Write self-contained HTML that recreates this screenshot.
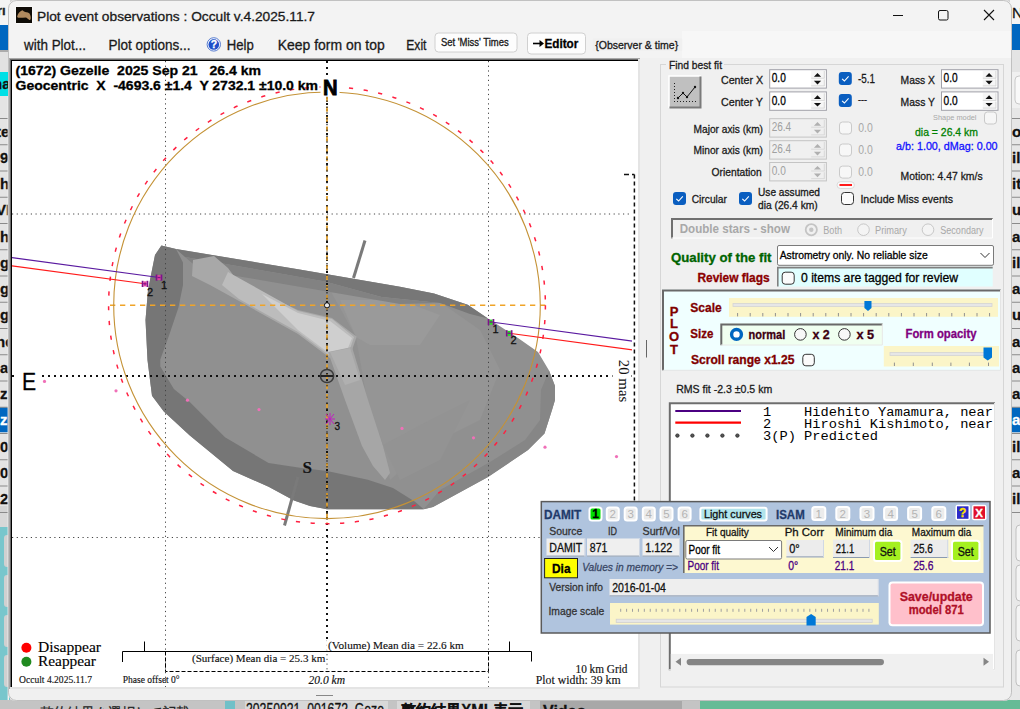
<!DOCTYPE html><html><head><meta charset="utf-8"><style>html,body{margin:0;padding:0;width:1020px;height:709px;overflow:hidden;background:#c8c8c8}svg{display:block}</style></head><body>
<svg width="1020" height="709" viewBox="0 0 1020 709">
<rect x="0" y="0" width="1020" height="709" fill="#d4d4d4" stroke="none" stroke-width="1" rx="0" />
<rect x="0" y="0" width="10" height="25" fill="#f4f4f4" stroke="none" stroke-width="1" rx="0" />
<text x="-3" y="15" font-family="Liberation Sans" font-size="13" font-weight="bold" font-style="normal" fill="#222" text-anchor="start"  stroke="#222" stroke-width="0.3">rı</text>
<rect x="0" y="25" width="10" height="25" fill="#0067c0" stroke="none" stroke-width="1" rx="0" />
<rect x="0" y="50" width="10" height="22" fill="#e2e2e2" stroke="none" stroke-width="1" rx="0" />
<line x1="0" y1="51" x2="10" y2="51" stroke="#9a9a9a" stroke-width="1.5" />
<rect x="0" y="72" width="10" height="26" fill="#00e0e6" stroke="none" stroke-width="1" rx="0" />
<text x="-7" y="89" font-family="Liberation Sans" font-size="15" font-weight="bold" font-style="normal" fill="#111" text-anchor="start"  stroke="#111" stroke-width="0.3">na</text>
<line x1="0" y1="98.5" x2="10" y2="98.5" stroke="#8a8a8a" stroke-width="1" />
<rect x="0" y="96" width="10" height="410" fill="#e4e4e4" stroke="none" stroke-width="1" rx="0" />
<line x1="0" y1="118.5" x2="10" y2="118.5" stroke="#8a8a8a" stroke-width="1" />
<text x="-4" y="136.5" font-family="Liberation Sans" font-size="15" font-weight="bold" font-style="normal" fill="#111" text-anchor="start"  stroke="#111" stroke-width="0.3">te</text>
<line x1="0" y1="144.75" x2="10" y2="144.75" stroke="#8a8a8a" stroke-width="1" />
<text x="0" y="162.75" font-family="Liberation Sans" font-size="15" font-weight="bold" font-style="normal" fill="#111" text-anchor="start"  stroke="#111" stroke-width="0.3">9</text>
<line x1="0" y1="171.0" x2="10" y2="171.0" stroke="#8a8a8a" stroke-width="1" />
<text x="0" y="189.0" font-family="Liberation Sans" font-size="15" font-weight="bold" font-style="normal" fill="#111" text-anchor="start"  stroke="#111" stroke-width="0.3">h</text>
<line x1="0" y1="197.25" x2="10" y2="197.25" stroke="#8a8a8a" stroke-width="1" />
<text x="-4" y="215.25" font-family="Liberation Sans" font-size="15" font-weight="bold" font-style="normal" fill="#111" text-anchor="start"  stroke="#111" stroke-width="0.3">VI</text>
<line x1="0" y1="223.5" x2="10" y2="223.5" stroke="#8a8a8a" stroke-width="1" />
<text x="0" y="241.5" font-family="Liberation Sans" font-size="15" font-weight="bold" font-style="normal" fill="#111" text-anchor="start"  stroke="#111" stroke-width="0.3">h</text>
<line x1="0" y1="249.75" x2="10" y2="249.75" stroke="#8a8a8a" stroke-width="1" />
<text x="0" y="267.75" font-family="Liberation Sans" font-size="15" font-weight="bold" font-style="normal" fill="#111" text-anchor="start"  stroke="#111" stroke-width="0.3">g</text>
<line x1="0" y1="276.0" x2="10" y2="276.0" stroke="#8a8a8a" stroke-width="1" />
<text x="0" y="294.0" font-family="Liberation Sans" font-size="15" font-weight="bold" font-style="normal" fill="#111" text-anchor="start"  stroke="#111" stroke-width="0.3">g</text>
<line x1="0" y1="302.25" x2="10" y2="302.25" stroke="#8a8a8a" stroke-width="1" />
<text x="0" y="320.25" font-family="Liberation Sans" font-size="15" font-weight="bold" font-style="normal" fill="#111" text-anchor="start"  stroke="#111" stroke-width="0.3">g</text>
<line x1="0" y1="328.5" x2="10" y2="328.5" stroke="#8a8a8a" stroke-width="1" />
<text x="-4" y="346.5" font-family="Liberation Sans" font-size="15" font-weight="bold" font-style="normal" fill="#111" text-anchor="start"  stroke="#111" stroke-width="0.3">nc</text>
<line x1="0" y1="354.75" x2="10" y2="354.75" stroke="#8a8a8a" stroke-width="1" />
<text x="0" y="372.75" font-family="Liberation Sans" font-size="15" font-weight="bold" font-style="normal" fill="#111" text-anchor="start"  stroke="#111" stroke-width="0.3">a</text>
<line x1="0" y1="381.0" x2="10" y2="381.0" stroke="#8a8a8a" stroke-width="1" />
<text x="0" y="399.0" font-family="Liberation Sans" font-size="15" font-weight="bold" font-style="normal" fill="#111" text-anchor="start"  stroke="#111" stroke-width="0.3">z</text>
<rect x="0" y="407.25" width="10" height="25" fill="#0067c0" stroke="none" stroke-width="1" rx="0" />
<line x1="0" y1="407.25" x2="10" y2="407.25" stroke="#8a8a8a" stroke-width="1" />
<text x="0" y="425.25" font-family="Liberation Sans" font-size="15" font-weight="bold" font-style="normal" fill="#fff" text-anchor="start"  stroke="#fff" stroke-width="0.3">z</text>
<line x1="0" y1="433.5" x2="10" y2="433.5" stroke="#8a8a8a" stroke-width="1" />
<text x="0" y="451.5" font-family="Liberation Sans" font-size="15" font-weight="bold" font-style="normal" fill="#111" text-anchor="start"  stroke="#111" stroke-width="0.3">0</text>
<line x1="0" y1="459.75" x2="10" y2="459.75" stroke="#8a8a8a" stroke-width="1" />
<text x="0" y="477.75" font-family="Liberation Sans" font-size="15" font-weight="bold" font-style="normal" fill="#111" text-anchor="start"  stroke="#111" stroke-width="0.3">0</text>
<line x1="0" y1="486.0" x2="10" y2="486.0" stroke="#8a8a8a" stroke-width="1" />
<text x="0" y="504.0" font-family="Liberation Sans" font-size="15" font-weight="bold" font-style="normal" fill="#111" text-anchor="start"  stroke="#111" stroke-width="0.3">2</text>
<line x1="0" y1="512.5" x2="10" y2="512.5" stroke="#8a8a8a" stroke-width="1" />
<rect x="0" y="513" width="10" height="14" fill="#d8d8d8" stroke="none" stroke-width="1" rx="0" />
<rect x="0" y="527" width="10" height="182" fill="#78c6cc" stroke="none" stroke-width="1" rx="0" />
<rect x="4" y="535" width="6" height="32" fill="#d0d0d0" stroke="none" stroke-width="1" rx="3" />
<rect x="4" y="575" width="6" height="32" fill="#d0d0d0" stroke="none" stroke-width="1" rx="3" />
<rect x="4" y="615" width="6" height="32" fill="#d0d0d0" stroke="none" stroke-width="1" rx="3" />
<rect x="4" y="655" width="6" height="32" fill="#d0d0d0" stroke="none" stroke-width="1" rx="3" />
<rect x="7.6" y="96" width="1.4" height="613" fill="#f0f0f0" stroke="none" stroke-width="1" rx="0" />
<rect x="1010" y="0" width="10" height="24" fill="#f4f4f4" stroke="none" stroke-width="1" rx="0" />
<text x="1012" y="18" font-family="Liberation Sans" font-size="15" font-weight="normal" font-style="normal" fill="#111" text-anchor="start"  stroke="#111" stroke-width="0.3">N</text>
<rect x="1010" y="24" width="10" height="26" fill="#0067c0" stroke="none" stroke-width="1" rx="0" />
<rect x="1010" y="50" width="10" height="22" fill="#e4e4e4" stroke="none" stroke-width="1" rx="0" />
<rect x="1010" y="72" width="10" height="36" fill="#f0f0f0" stroke="none" stroke-width="1" rx="0" />
<rect x="1015" y="76" width="10" height="28" fill="#f8f8f8" stroke="#c8c8c8" stroke-width="1" rx="4" />
<rect x="1010" y="108" width="10" height="600" fill="#e6e6e6" stroke="none" stroke-width="1" rx="0" />
<line x1="1010" y1="118.5" x2="1020" y2="118.5" stroke="#8a8a8a" stroke-width="1" />
<text x="1012" y="136.5" font-family="Liberation Sans" font-size="15" font-weight="bold" font-style="normal" fill="#111" text-anchor="start"  stroke="#111" stroke-width="0.3">oc</text>
<line x1="1010" y1="144.75" x2="1020" y2="144.75" stroke="#8a8a8a" stroke-width="1" />
<text x="1012" y="162.75" font-family="Liberation Sans" font-size="15" font-weight="bold" font-style="normal" fill="#111" text-anchor="start"  stroke="#111" stroke-width="0.3">il</text>
<line x1="1010" y1="171.0" x2="1020" y2="171.0" stroke="#8a8a8a" stroke-width="1" />
<text x="1012" y="189.0" font-family="Liberation Sans" font-size="15" font-weight="bold" font-style="normal" fill="#111" text-anchor="start"  stroke="#111" stroke-width="0.3">it</text>
<line x1="1010" y1="197.25" x2="1020" y2="197.25" stroke="#8a8a8a" stroke-width="1" />
<text x="1012" y="215.25" font-family="Liberation Sans" font-size="15" font-weight="bold" font-style="normal" fill="#111" text-anchor="start"  stroke="#111" stroke-width="0.3">u</text>
<line x1="1010" y1="223.5" x2="1020" y2="223.5" stroke="#8a8a8a" stroke-width="1" />
<text x="1012" y="241.5" font-family="Liberation Sans" font-size="15" font-weight="bold" font-style="normal" fill="#111" text-anchor="start"  stroke="#111" stroke-width="0.3">ak</text>
<line x1="1010" y1="249.75" x2="1020" y2="249.75" stroke="#8a8a8a" stroke-width="1" />
<text x="1012" y="267.75" font-family="Liberation Sans" font-size="15" font-weight="bold" font-style="normal" fill="#111" text-anchor="start"  stroke="#111" stroke-width="0.3">il</text>
<line x1="1010" y1="276.0" x2="1020" y2="276.0" stroke="#8a8a8a" stroke-width="1" />
<text x="1012" y="294.0" font-family="Liberation Sans" font-size="15" font-weight="bold" font-style="normal" fill="#111" text-anchor="start"  stroke="#111" stroke-width="0.3">ag</text>
<line x1="1010" y1="302.25" x2="1020" y2="302.25" stroke="#8a8a8a" stroke-width="1" />
<text x="1012" y="320.25" font-family="Liberation Sans" font-size="15" font-weight="bold" font-style="normal" fill="#111" text-anchor="start"  stroke="#111" stroke-width="0.3">u</text>
<line x1="1010" y1="328.5" x2="1020" y2="328.5" stroke="#8a8a8a" stroke-width="1" />
<text x="1012" y="346.5" font-family="Liberation Sans" font-size="15" font-weight="bold" font-style="normal" fill="#111" text-anchor="start"  stroke="#111" stroke-width="0.3">ak</text>
<line x1="1010" y1="354.75" x2="1020" y2="354.75" stroke="#8a8a8a" stroke-width="1" />
<text x="1012" y="372.75" font-family="Liberation Sans" font-size="15" font-weight="bold" font-style="normal" fill="#111" text-anchor="start"  stroke="#111" stroke-width="0.3">a</text>
<line x1="1010" y1="381.0" x2="1020" y2="381.0" stroke="#8a8a8a" stroke-width="1" />
<text x="1012" y="399.0" font-family="Liberation Sans" font-size="15" font-weight="bold" font-style="normal" fill="#111" text-anchor="start"  stroke="#111" stroke-width="0.3">at</text>
<rect x="1010" y="407.25" width="10" height="25" fill="#0067c0" stroke="none" stroke-width="1" rx="0" />
<line x1="1010" y1="407.25" x2="1020" y2="407.25" stroke="#8a8a8a" stroke-width="1" />
<text x="1012" y="425.25" font-family="Liberation Sans" font-size="15" font-weight="bold" font-style="normal" fill="#fff" text-anchor="start"  stroke="#fff" stroke-width="0.3">a</text>
<line x1="1010" y1="433.5" x2="1020" y2="433.5" stroke="#8a8a8a" stroke-width="1" />
<text x="1012" y="451.5" font-family="Liberation Sans" font-size="15" font-weight="bold" font-style="normal" fill="#111" text-anchor="start"  stroke="#111" stroke-width="0.3">il</text>
<line x1="1010" y1="459.75" x2="1020" y2="459.75" stroke="#8a8a8a" stroke-width="1" />
<text x="1012" y="477.75" font-family="Liberation Sans" font-size="15" font-weight="bold" font-style="normal" fill="#111" text-anchor="start"  stroke="#111" stroke-width="0.3">ag</text>
<line x1="1010" y1="486.0" x2="1020" y2="486.0" stroke="#8a8a8a" stroke-width="1" />
<text x="1012" y="504.0" font-family="Liberation Sans" font-size="15" font-weight="bold" font-style="normal" fill="#111" text-anchor="start"  stroke="#111" stroke-width="0.3">il</text>
<line x1="1010" y1="512.5" x2="1020" y2="512.5" stroke="#8a8a8a" stroke-width="1" />
<rect x="1010" y="513" width="10" height="187" fill="#e8e8e8" stroke="none" stroke-width="1" rx="0" />
<rect x="1016" y="525" width="10" height="36" fill="#f4f4f4" stroke="#c0c0c0" stroke-width="1" rx="4" />
<rect x="1016" y="565" width="10" height="36" fill="#f4f4f4" stroke="#c0c0c0" stroke-width="1" rx="4" />
<rect x="1016" y="605" width="10" height="36" fill="#f4f4f4" stroke="#c0c0c0" stroke-width="1" rx="4" />
<rect x="1016" y="650" width="10" height="36" fill="#f4f4f4" stroke="#c0c0c0" stroke-width="1" rx="4" />
<rect x="0" y="700" width="1020" height="9" fill="#c4c4c4" stroke="none" stroke-width="1" rx="0" />
<rect x="225" y="700" width="10" height="9" fill="#70c0c8" stroke="none" stroke-width="1" rx="0" />
<rect x="245" y="700" width="143" height="9" fill="#d8d8d8" stroke="none" stroke-width="1" rx="0" />
<text x="246" y="715" font-family="Liberation Sans" font-size="16" font-weight="normal" font-style="normal" fill="#111" text-anchor="start" textLength="138" lengthAdjust="spacingAndGlyphs"  stroke="#111" stroke-width="0.3">20250921_001672_Geze</text>
<rect x="397" y="700" width="133" height="9" fill="#d8d8d8" stroke="none" stroke-width="1" rx="0" />
<text x="401" y="716" font-family="Liberation Sans" font-size="16" font-weight="bold" font-style="normal" fill="#111" text-anchor="start" textLength="122" lengthAdjust="spacingAndGlyphs"  stroke="#111" stroke-width="0.3">整約結果XML表示</text>
<rect x="540" y="700" width="142" height="9" fill="#a8a8a8" stroke="none" stroke-width="1" rx="0" />
<text x="543" y="717" font-family="Liberation Sans" font-size="16" font-weight="bold" font-style="normal" fill="#111" text-anchor="start"  stroke="#111" stroke-width="0.3">Video</text>
<rect x="700" y="700" width="320" height="9" fill="#66bb96" stroke="none" stroke-width="1" rx="0" />
<text x="40" y="719" font-family="Liberation Sans" font-size="16" font-weight="normal" font-style="normal" fill="#222" text-anchor="start" textLength="150" lengthAdjust="spacingAndGlyphs"  stroke="#222" stroke-width="0.3">整約結果を選択して記載</text>
<defs><clipPath id="win"><rect x="8" y="0" width="1004" height="701" rx="8"/></clipPath><clipPath id="plotclip"><rect x="12" y="61" width="626" height="626"/></clipPath></defs>
<g clip-path="url(#win)">
<rect x="8" y="0" width="1004" height="701" fill="#f0f0f0" stroke="none" stroke-width="1" rx="0" />
<rect x="8" y="0" width="1004" height="31" fill="#f3f3f3" stroke="none" stroke-width="1" rx="0" />
<rect x="8" y="31" width="1004" height="27" fill="#f7f7f7" stroke="none" stroke-width="1" rx="0" />
<rect x="8" y="31" width="674" height="27" fill="#f3f3f3" stroke="none" stroke-width="1" rx="0" />
</g>
<rect x="8.5" y="0.5" width="1003" height="700" fill="none" stroke="#a0a0a0" stroke-width="1" rx="8" stroke-opacity="0.6"/>
<rect x="15.5" y="6.5" width="17" height="17" fill="#fff" stroke="none" stroke-width="1" rx="1" />
<path d="M16,7 h16 v16 h-16 z" fill="#0e0b06" stroke="none" stroke-width="1" />
<path d="M17.2,16.3 C18,13 20.5,11 22.5,10.3 L24,11.5 L26.1,12.3 C28,12 29.5,13 30,14.5 C30.8,16 30.9,18 30.7,18.5 C30.5,19.8 29.8,20.2 29.4,20 L26.1,17.4 L22.8,17.8 L18.4,17.8 C17.5,17.6 17.1,17 17.2,16.3 Z" fill="#b08a5e" stroke="none" stroke-width="1" />
<text x="37" y="20.5" font-family="Liberation Sans" font-size="13.4" font-weight="normal" font-style="normal" fill="#1a1a1a" text-anchor="start" textLength="278" lengthAdjust="spacingAndGlyphs"  stroke="#1a1a1a" stroke-width="0.3">Plot event observations : Occult v.4.2025.11.7</text>
<line x1="893" y1="15.5" x2="903" y2="15.5" stroke="#111" stroke-width="1" />
<rect x="938.5" y="10.5" width="9.5" height="9.5" fill="none" stroke="#111" stroke-width="1" rx="1.5" />
<path d="M984,10 L994,20 M994,10 L984,20" fill="none" stroke="#111" stroke-width="1.1" />
<text x="24" y="50" font-family="Liberation Sans" font-size="14.5" font-weight="normal" font-style="normal" fill="#1a1a1a" text-anchor="start" textLength="62" lengthAdjust="spacingAndGlyphs"  stroke="#1a1a1a" stroke-width="0.3">with Plot...</text>
<text x="108.5" y="50" font-family="Liberation Sans" font-size="14.5" font-weight="normal" font-style="normal" fill="#1a1a1a" text-anchor="start" textLength="82" lengthAdjust="spacingAndGlyphs"  stroke="#1a1a1a" stroke-width="0.3">Plot options...</text>
<circle cx="213.8" cy="44.4" r="6.7" fill="#f4f8ff" stroke="#5a7ed0" stroke-width="1"/>
<circle cx="213.8" cy="44.4" r="5.3" fill="#1f4fc8"/>
<text x="213.9" y="48.4" font-family="Liberation Sans" font-size="10.5" font-weight="bold" font-style="normal" fill="#fff" text-anchor="middle"  stroke="#fff" stroke-width="0.3">?</text>
<text x="226.8" y="50" font-family="Liberation Sans" font-size="14.5" font-weight="normal" font-style="normal" fill="#1a1a1a" text-anchor="start" textLength="27" lengthAdjust="spacingAndGlyphs"  stroke="#1a1a1a" stroke-width="0.3">Help</text>
<text x="277.7" y="50" font-family="Liberation Sans" font-size="14.5" font-weight="normal" font-style="normal" fill="#1a1a1a" text-anchor="start" textLength="107" lengthAdjust="spacingAndGlyphs"  stroke="#1a1a1a" stroke-width="0.3">Keep form on top</text>
<text x="406.2" y="50" font-family="Liberation Sans" font-size="14.5" font-weight="normal" font-style="normal" fill="#1a1a1a" text-anchor="start" textLength="20.3" lengthAdjust="spacingAndGlyphs"  stroke="#1a1a1a" stroke-width="0.3">Exit</text>
<rect x="435" y="33" width="82" height="19" fill="#fdfdfd" stroke="#d0d0d0" stroke-width="1" rx="3.5" />
<text x="441" y="45.7" font-family="Liberation Sans" font-size="10" font-weight="normal" font-style="normal" fill="#1a1a1a" text-anchor="start" textLength="67.7" lengthAdjust="spacingAndGlyphs"  stroke="#1a1a1a" stroke-width="0.3">Set &#x27;Miss&#x27; Times</text>
<rect x="527.5" y="33" width="58" height="21" fill="#fdfdfd" stroke="#d0d0d0" stroke-width="1" rx="3.5" />
<path d="M533,43.5 H542" fill="none" stroke="#000" stroke-width="1.6" />
<path d="M539.5,40 L544,43.5 L539.5,47 Z" fill="#000" stroke="none" stroke-width="1" />
<text x="544.5" y="48.3" font-family="Liberation Sans" font-size="12.5" font-weight="bold" font-style="normal" fill="#000" text-anchor="start" textLength="33.8" lengthAdjust="spacingAndGlyphs"  stroke="#000" stroke-width="0.3">Editor</text>
<rect x="592.6" y="38.4" width="89.6" height="12.5" fill="#f0f0f0" stroke="none" stroke-width="1" rx="0" />
<text x="595.2" y="48.8" font-family="Liberation Sans" font-size="11" font-weight="normal" font-style="normal" fill="#1a1a1a" text-anchor="start" textLength="83" lengthAdjust="spacingAndGlyphs"  stroke="#1a1a1a" stroke-width="0.3">{Observer &amp; time}</text>
<rect x="9" y="58" width="631" height="631" fill="#fff" stroke="none" stroke-width="1" rx="0" />
<rect x="9" y="58" width="1" height="631" fill="#a8a8a8" stroke="none" stroke-width="1" rx="0" />
<rect x="9" y="58" width="631" height="1" fill="#a8a8a8" stroke="none" stroke-width="1" rx="0" />
<rect x="10" y="59" width="1" height="630" fill="#6a6a6a" stroke="none" stroke-width="1" rx="0" />
<rect x="10" y="59" width="630" height="1" fill="#6a6a6a" stroke="none" stroke-width="1" rx="0" />
<rect x="11" y="60" width="1" height="629" fill="#000" stroke="none" stroke-width="1" rx="0" />
<rect x="11" y="60" width="629" height="1" fill="#000" stroke="none" stroke-width="1" rx="0" />
<rect x="638" y="59" width="2" height="630" fill="#e4e4e4" stroke="none" stroke-width="1" rx="0" />
<rect x="10" y="687" width="630" height="2" fill="#e4e4e4" stroke="none" stroke-width="1" rx="0" />
<g clip-path="url(#plotclip)">
<polygon points="161.4,245.6 176,249 298,269.3 400,286.8 434,293.5 467.7,304.8 488,318.4 518,338 538,352 549,370.6 555,386 555,400 552,410 544.5,433.5 528,450 488,477 433,507 423.7,509.3 327,509.3 310,506 294,500.6 268.6,486.7 233,471 189.5,435.3 163.8,411.6 152,395.8 150,380 147.5,360 145.5,320 148,290 152,270 155,255" fill="#909090" />
<polygon points="330,290 440,302 480,330 500,370 480,420 430,445 390,480 383,445 367,400 356,337" fill="#959595" />
<polygon points="340,300 400,300 440,315 420,345 370,345 356,337" fill="#9a9a9a" />
<polygon points="383,445 430,420 470,400 440,460 400,480" fill="#939393" />
<polygon points="176,249 298,269.3 400,286.8 434,293.5 467.7,304.8 488,318.4 470,314 440,303 381.6,297 325,281.4 280,273.5 185,257" fill="#777777" />
<polygon points="185,257 280,273.5 325,281.4 381.6,297 440,303 400,304 330,292 260,280 200,270" fill="#828282" />
<polygon points="549,370.6 555,386 555,400 552,410 544.5,433.5 528,450 488,477 433,507 423.7,509.3 440,490 490,462 525,440 540,420 541,390" fill="#868686" />
<polygon points="161.4,245.6 155,255 152,270 148,290 145.5,320 147.5,360 150,380 152,395.8 163.8,411.6 189.5,435.3 233,471 268.6,486.7 294,500.6 310,506 327,509.3 423.7,509.3 415,501.7 393,488 367.8,479.7 327,471 300,467.8 268.6,463 225,437.3 189.5,401.7 173.9,389 160.3,366.4 160.3,359.6 169.3,334.8 178.4,307.7 183,285 183,262.6 176,249" fill="#767676" />
<polygon points="193,260 214,256 228,268 239,283 298,310 332,318 356.7,336.7 352,350 330,358 298,334 239,301 210,285 192,276" fill="#a8a8a8" />
<polygon points="228,272 298,311 332,319 354,337 350,349 330,356 298,332 239,299 222,285" fill="#bcbcbc" />
<polygon points="262,294 298,313 330,321 352,338 348,348 330,354 298,330" fill="#cfcfcf" />
<polygon points="328,352 352,347 368,400 383,446 390,473 385,480 373,466 362,446 345,400" fill="#a6a6a6" />
<polygon points="330,352 350,348 360,380 345,385" fill="#b0b0b0" />
<line x1="365" y1="240.5" x2="353.5" y2="278" stroke="#7a7a7a" stroke-width="3" />
<line x1="298" y1="477" x2="284.5" y2="525.5" stroke="#7a7a7a" stroke-width="3" />
<line x1="165.5" y1="61" x2="165.5" y2="687" stroke="#444" stroke-width="1" stroke-dasharray="1.2 3.5"/>
<line x1="488.5" y1="61" x2="488.5" y2="687" stroke="#444" stroke-width="1" stroke-dasharray="1.2 3.5"/>
<line x1="12" y1="214" x2="638" y2="214" stroke="#444" stroke-width="1" stroke-dasharray="1.2 3.5"/>
<line x1="12" y1="537.5" x2="638" y2="537.5" stroke="#444" stroke-width="1" stroke-dasharray="1.2 3.5"/>
<line x1="327" y1="61" x2="327" y2="640" stroke="#111" stroke-width="2" stroke-dasharray="2 4"/>
<line x1="327" y1="640" x2="327" y2="687" stroke="#444" stroke-width="1" stroke-dasharray="1.2 3.5"/>
<line x1="12" y1="376" x2="638" y2="376" stroke="#111" stroke-width="2" stroke-dasharray="2 4"/>
<line x1="327" y1="87" x2="327" y2="524" stroke="#e0a030" stroke-width="1.8" stroke-dasharray="5 4.9"/>
<line x1="327" y1="87" x2="327" y2="524" stroke="#333" stroke-width="1.4" stroke-dasharray="1.5 4.3" stroke-dashoffset="-2"/>
<line x1="110" y1="305.3" x2="546" y2="305.3" stroke="#f0a428" stroke-width="1.6" stroke-dasharray="5.3 4.7"/>
<circle cx="327" cy="305.3" r="218.4" fill="none" stroke="#ff2040" stroke-width="1.5" stroke-dasharray="4.2 10.6"/>
<circle cx="327" cy="305.3" r="213.3" fill="none" stroke="#c49236" stroke-width="1.1"/>
<circle cx="327" cy="305.3" r="2.6" fill="#e8e8e8" stroke="#111" stroke-width="1"/>
<circle cx="327" cy="376" r="6.6" fill="none" stroke="#3a3a3a" stroke-width="1.5"/>
<line x1="321" y1="376" x2="333" y2="376" stroke="#222" stroke-width="2" />
<line x1="12" y1="257.655" x2="159" y2="277.5" stroke="#5a1aa0" stroke-width="1.1" />
<line x1="491" y1="322" x2="638" y2="341.845" stroke="#5a1aa0" stroke-width="1.1" />
<line x1="12" y1="265.845" x2="145" y2="283.8" stroke="#ff1a1a" stroke-width="1.1" />
<line x1="509.2" y1="333.2" x2="638" y2="350.58799999999997" stroke="#ff1a1a" stroke-width="1.1" />
<rect x="155.7" y="274.5" width="1.8" height="6.2" fill="#80108c" stroke="none" stroke-width="1" rx="0" />
<rect x="160.5" y="274.5" width="1.8" height="6.2" fill="#80108c" stroke="none" stroke-width="1" rx="0" />
<rect x="157.5" y="275.1" width="3.0" height="5.0" fill="#e040a0" stroke="none" stroke-width="1" rx="0" />
<rect x="157.5" y="276.9" width="3.0" height="1.3" fill="#80108c" stroke="none" stroke-width="1" rx="0" />
<rect x="141.7" y="280.8" width="1.8" height="6.2" fill="#80108c" stroke="none" stroke-width="1" rx="0" />
<rect x="146.5" y="280.8" width="1.8" height="6.2" fill="#80108c" stroke="none" stroke-width="1" rx="0" />
<rect x="143.5" y="281.40000000000003" width="3.0" height="5.0" fill="#e040a0" stroke="none" stroke-width="1" rx="0" />
<rect x="143.5" y="283.2" width="3.0" height="1.3" fill="#80108c" stroke="none" stroke-width="1" rx="0" />
<rect x="487.7" y="319" width="1.8" height="6.2" fill="#80108c" stroke="none" stroke-width="1" rx="0" />
<rect x="492.5" y="319" width="1.8" height="6.2" fill="#80108c" stroke="none" stroke-width="1" rx="0" />
<rect x="489.5" y="319.6" width="3.0" height="5.0" fill="#20e020" stroke="none" stroke-width="1" rx="0" />
<rect x="489.5" y="321.4" width="3.0" height="1.3" fill="#80108c" stroke="none" stroke-width="1" rx="0" />
<rect x="505.9" y="330.2" width="1.8" height="6.2" fill="#80108c" stroke="none" stroke-width="1" rx="0" />
<rect x="510.7" y="330.2" width="1.8" height="6.2" fill="#80108c" stroke="none" stroke-width="1" rx="0" />
<rect x="507.7" y="330.8" width="3.0" height="5.0" fill="#20e020" stroke="none" stroke-width="1" rx="0" />
<rect x="507.7" y="332.59999999999997" width="3.0" height="1.3" fill="#80108c" stroke="none" stroke-width="1" rx="0" />
<text x="161" y="289" font-family="Liberation Sans" font-size="11" font-weight="normal" font-style="normal" fill="#111" text-anchor="start"  stroke="#111" stroke-width="0.3">1</text>
<text x="147" y="295.5" font-family="Liberation Sans" font-size="11" font-weight="normal" font-style="normal" fill="#111" text-anchor="start"  stroke="#111" stroke-width="0.3">2</text>
<text x="492.5" y="333" font-family="Liberation Sans" font-size="11" font-weight="normal" font-style="normal" fill="#111" text-anchor="start"  stroke="#111" stroke-width="0.3">1</text>
<text x="510.5" y="344" font-family="Liberation Sans" font-size="11" font-weight="normal" font-style="normal" fill="#111" text-anchor="start"  stroke="#111" stroke-width="0.3">2</text>
<circle cx="44.5" cy="381.40000000000003" r="1.6" fill="#f070b8"/>
<circle cx="116.0" cy="390.8" r="1.6" fill="#f070b8"/>
<circle cx="187.5" cy="400.2" r="1.6" fill="#f070b8"/>
<circle cx="259.0" cy="409.6" r="1.6" fill="#f070b8"/>
<circle cx="402.0" cy="428.40000000000003" r="1.6" fill="#f070b8"/>
<circle cx="473.5" cy="437.8" r="1.6" fill="#f070b8"/>
<circle cx="545.0" cy="447.20000000000005" r="1.6" fill="#f070b8"/>
<circle cx="616.5" cy="456.6" r="1.6" fill="#f070b8"/>
<path d="M326,414 L334,424 M334,414 L326,424 M330,413 L330,425 M325,419 L335,419" fill="none" stroke="#c020c0" stroke-width="1" />
<text x="334.5" y="430" font-family="Liberation Sans" font-size="10" font-weight="normal" font-style="normal" fill="#111" text-anchor="start"  stroke="#111" stroke-width="0.3">3</text>
<rect x="320.5" y="77" width="19" height="19" fill="#fff" stroke="none" stroke-width="1" rx="0" />
<line x1="327" y1="61" x2="327" y2="77" stroke="#111" stroke-width="2" stroke-dasharray="2 4"/>
<text x="323" y="94.7" font-family="Liberation Sans" font-size="22" font-weight="bold" font-style="normal" fill="#000" text-anchor="start" textLength="14.6" lengthAdjust="spacingAndGlyphs" stroke="#000" stroke-width="0.9">N</text>
<rect x="17" y="369" width="21" height="24" fill="#fff" stroke="none" stroke-width="1" rx="0" />
<text x="21.9" y="390" font-family="Liberation Sans" font-size="23" font-weight="normal" font-style="normal" fill="#000" text-anchor="start" textLength="14.1" lengthAdjust="spacingAndGlyphs"  stroke="#000" stroke-width="0.3">E</text>
<text x="302.5" y="473" font-family="Liberation Serif" font-size="17" font-weight="bold" font-style="normal" fill="#111" text-anchor="start"  stroke="#111" stroke-width="0.15">S</text>
<rect x="632" y="61" width="6" height="626" fill="#fff" stroke="none" stroke-width="1" rx="0" />
<line x1="634.4" y1="174.5" x2="634.4" y2="502" stroke="#111" stroke-width="1.5" stroke-dasharray="4 3"/>
<line x1="624" y1="174.5" x2="634.4" y2="174.5" stroke="#111" stroke-width="1.5" stroke-dasharray="5 3"/>
<rect x="612.5" y="355" width="19" height="50" fill="#fff" stroke="none" stroke-width="1" rx="0" />
<text x="0" y="0" transform="translate(618.5,359.8) rotate(90)" font-family="Liberation Serif" font-size="15.5" fill="#111" textLength="42.5" lengthAdjust="spacingAndGlyphs">20 mas</text>
<text x="15.5" y="74.5" font-family="Liberation Sans" font-size="13" font-weight="bold" font-style="normal" fill="#000" text-anchor="start" textLength="245.5" lengthAdjust="spacingAndGlyphs" xml:space="preserve" stroke="#000" stroke-width="0.3">(1672) Gezelle  2025 Sep 21   26.4 km</text>
<text x="15.5" y="90.2" font-family="Liberation Sans" font-size="13" font-weight="bold" font-style="normal" fill="#000" text-anchor="start" textLength="302.5" lengthAdjust="spacingAndGlyphs" xml:space="preserve" stroke="#000" stroke-width="0.3">Geocentric  X  -4693.6 ±1.4  Y 2732.1 ±10.0 km</text>
<circle cx="26.4" cy="647.7" r="5" fill="#ff0000"/>
<circle cx="26.4" cy="661.7" r="5" fill="#208a20"/>
<text x="38" y="652.4" font-family="Liberation Serif" font-size="15.5" font-weight="normal" font-style="normal" fill="#000" text-anchor="start" textLength="63" lengthAdjust="spacingAndGlyphs"  stroke="#000" stroke-width="0.15">Disappear</text>
<text x="38" y="666.3" font-family="Liberation Serif" font-size="15.5" font-weight="normal" font-style="normal" fill="#000" text-anchor="start" textLength="58" lengthAdjust="spacingAndGlyphs"  stroke="#000" stroke-width="0.15">Reappear</text>
<text x="19" y="683" font-family="Liberation Serif" font-size="11" font-weight="normal" font-style="normal" fill="#111" text-anchor="start" textLength="73" lengthAdjust="spacingAndGlyphs"  stroke="#111" stroke-width="0.15">Occult 4.2025.11.7</text>
<text x="122.7" y="683" font-family="Liberation Serif" font-size="11" font-weight="normal" font-style="normal" fill="#111" text-anchor="start" textLength="57" lengthAdjust="spacingAndGlyphs"  stroke="#111" stroke-width="0.15">Phase offset 0°</text>
<path d="M122.5,662 V651.5 H531.5 V661.5" fill="none" stroke="#000" stroke-width="1" />
<line x1="144.5" y1="641.5" x2="144.5" y2="651.5" stroke="#000" stroke-width="1" />
<line x1="509.5" y1="641.5" x2="509.5" y2="651.5" stroke="#000" stroke-width="1" />
<path d="M165.5,651.5 V671.5 H488.5 V651.5" fill="none" stroke="#000" stroke-width="1" stroke-dasharray="4 2"/>
<text x="192" y="661.7" font-family="Liberation Serif" font-size="11" font-weight="normal" font-style="normal" fill="#111" text-anchor="start" textLength="133.3" lengthAdjust="spacingAndGlyphs" xml:space="preserve" stroke="#111" stroke-width="0.15">(Surface) Mean dia = 25.3 km</text>
<rect x="326.5" y="639" width="139" height="11.5" fill="#fff" stroke="none" stroke-width="1" rx="0" />
<text x="328" y="648.6" font-family="Liberation Serif" font-size="11" font-weight="normal" font-style="normal" fill="#111" text-anchor="start" textLength="135.8" lengthAdjust="spacingAndGlyphs" xml:space="preserve" stroke="#111" stroke-width="0.15">(Volume) Mean dia = 22.6 km</text>
<rect x="306" y="673" width="42" height="13" fill="#fff" stroke="none" stroke-width="1" rx="0" />
<text x="308.5" y="684" font-family="Liberation Serif" font-size="13" font-weight="normal" font-style="italic" fill="#111" text-anchor="start" textLength="36.5" lengthAdjust="spacingAndGlyphs"  stroke="#111" stroke-width="0.15">20.0 km</text>
<text x="575.5" y="673" font-family="Liberation Serif" font-size="11.5" font-weight="normal" font-style="normal" fill="#111" text-anchor="start" textLength="52" lengthAdjust="spacingAndGlyphs"  stroke="#111" stroke-width="0.15">10 km Grid</text>
<text x="535.7" y="684" font-family="Liberation Serif" font-size="13" font-weight="normal" font-style="normal" fill="#111" text-anchor="start" textLength="85" lengthAdjust="spacingAndGlyphs"  stroke="#111" stroke-width="0.15">Plot width: 39 km</text>
</g>
<line x1="316" y1="695.5" x2="333" y2="695.5" stroke="#888" stroke-width="1" />
<line x1="646.5" y1="340" x2="646.5" y2="357.5" stroke="#666" stroke-width="1" />
<rect x="660.5" y="64.5" width="343" height="622.5" fill="none" stroke="#d6d6d6" stroke-width="1" rx="0" />
<rect x="666" y="58" width="58" height="10" fill="#f0f0f0" stroke="none" stroke-width="1" rx="0" />
<text x="669" y="69" font-family="Liberation Sans" font-size="11" font-weight="normal" font-style="normal" fill="#1a1a1a" text-anchor="start" textLength="53" lengthAdjust="spacingAndGlyphs"  stroke="#1a1a1a" stroke-width="0.3">Find best fit</text>
<rect x="669" y="76" width="32" height="32" fill="#c0c0c0" stroke="none" stroke-width="1" rx="0" />
<path d="M669,108 V76 H701" fill="none" stroke="#fff" stroke-width="1.5" />
<path d="M669.5,107.5 H700.5 V76.5" fill="none" stroke="#7a7a7a" stroke-width="2" />
<rect x="674" y="83" width="1" height="1" fill="#222" stroke="none" stroke-width="1" rx="0" />
<rect x="674" y="86" width="1" height="1" fill="#222" stroke="none" stroke-width="1" rx="0" />
<rect x="674" y="89" width="1" height="1" fill="#222" stroke="none" stroke-width="1" rx="0" />
<rect x="674" y="92" width="1" height="1" fill="#222" stroke="none" stroke-width="1" rx="0" />
<rect x="674" y="95" width="1" height="1" fill="#222" stroke="none" stroke-width="1" rx="0" />
<rect x="674" y="98" width="1" height="1" fill="#222" stroke="none" stroke-width="1" rx="0" />
<rect x="674" y="101" width="1" height="1" fill="#222" stroke="none" stroke-width="1" rx="0" />
<rect x="674" y="101" width="1" height="1" fill="#222" stroke="none" stroke-width="1" rx="0" />
<rect x="677" y="101" width="1" height="1" fill="#222" stroke="none" stroke-width="1" rx="0" />
<rect x="680" y="101" width="1" height="1" fill="#222" stroke="none" stroke-width="1" rx="0" />
<rect x="683" y="101" width="1" height="1" fill="#222" stroke="none" stroke-width="1" rx="0" />
<rect x="686" y="101" width="1" height="1" fill="#222" stroke="none" stroke-width="1" rx="0" />
<rect x="689" y="101" width="1" height="1" fill="#222" stroke="none" stroke-width="1" rx="0" />
<rect x="692" y="101" width="1" height="1" fill="#222" stroke="none" stroke-width="1" rx="0" />
<rect x="695" y="101" width="1" height="1" fill="#222" stroke="none" stroke-width="1" rx="0" />
<path d="M678,98 L683,93 L687,97 L695,87" fill="none" stroke="#111" stroke-width="1" />
<circle cx="678" cy="98" r="1.2" fill="#111"/>
<circle cx="683" cy="93" r="1.2" fill="#111"/>
<circle cx="687" cy="97" r="1.2" fill="#111"/>
<circle cx="695" cy="87" r="1.2" fill="#111"/>
<rect x="769.7" y="69.7" width="56.69999999999993" height="18.4" fill="#fff" stroke="#a0a0a8" stroke-width="1" rx="0" />
<rect x="811.1999999999999" y="71.0" width="13.3" height="7.4" fill="#f6f6f6" stroke="none" stroke-width="1" rx="0" />
<line x1="811.1999999999999" y1="78.2" x2="824.4999999999999" y2="78.2" stroke="#d8d8d8" stroke-width="1" />
<line x1="824.3" y1="71.0" x2="824.3" y2="78.4" stroke="#d8d8d8" stroke-width="1" />
<rect x="811.1999999999999" y="79.4" width="13.3" height="6.7" fill="#f6f6f6" stroke="none" stroke-width="1" rx="0" />
<line x1="811.1999999999999" y1="85.9" x2="824.4999999999999" y2="85.9" stroke="#d8d8d8" stroke-width="1" />
<line x1="824.3" y1="79.4" x2="824.3" y2="86.10000000000001" stroke="#d8d8d8" stroke-width="1" />
<path d="M813.8999999999999,76.8 L817.4999999999999,73.10000000000001 L821.0999999999999,76.8 Z" fill="#111" stroke="none" stroke-width="1" />
<path d="M813.8999999999999,80.7 L817.4999999999999,84.4 L821.0999999999999,80.7 Z" fill="#111" stroke="none" stroke-width="1" />
<text x="771.7" y="82.4" font-family="Liberation Sans" font-size="12.5" font-weight="normal" font-style="normal" fill="#000" text-anchor="start" textLength="14.1" lengthAdjust="spacingAndGlyphs"  stroke="#000" stroke-width="0.3">0.0</text>
<rect x="769.7" y="91.9" width="56.69999999999993" height="18.4" fill="#fff" stroke="#a0a0a8" stroke-width="1" rx="0" />
<rect x="811.1999999999999" y="93.2" width="13.3" height="7.4" fill="#f6f6f6" stroke="none" stroke-width="1" rx="0" />
<line x1="811.1999999999999" y1="100.4" x2="824.4999999999999" y2="100.4" stroke="#d8d8d8" stroke-width="1" />
<line x1="824.3" y1="93.2" x2="824.3" y2="100.60000000000001" stroke="#d8d8d8" stroke-width="1" />
<rect x="811.1999999999999" y="101.60000000000001" width="13.3" height="6.7" fill="#f6f6f6" stroke="none" stroke-width="1" rx="0" />
<line x1="811.1999999999999" y1="108.10000000000001" x2="824.4999999999999" y2="108.10000000000001" stroke="#d8d8d8" stroke-width="1" />
<line x1="824.3" y1="101.60000000000001" x2="824.3" y2="108.30000000000001" stroke="#d8d8d8" stroke-width="1" />
<path d="M813.8999999999999,99.0 L817.4999999999999,95.30000000000001 L821.0999999999999,99.0 Z" fill="#111" stroke="none" stroke-width="1" />
<path d="M813.8999999999999,102.9 L817.4999999999999,106.60000000000001 L821.0999999999999,102.9 Z" fill="#111" stroke="none" stroke-width="1" />
<text x="771.7" y="104.60000000000001" font-family="Liberation Sans" font-size="12.5" font-weight="normal" font-style="normal" fill="#000" text-anchor="start" textLength="14.1" lengthAdjust="spacingAndGlyphs"  stroke="#000" stroke-width="0.3">0.0</text>
<rect x="769.7" y="118.7" width="56.69999999999993" height="18.4" fill="#f0f0f0" stroke="#c4c4c4" stroke-width="1" rx="0" />
<rect x="811.1999999999999" y="120.0" width="13.3" height="7.4" fill="#efefef" stroke="none" stroke-width="1" rx="0" />
<line x1="811.1999999999999" y1="127.2" x2="824.4999999999999" y2="127.2" stroke="#d8d8d8" stroke-width="1" />
<line x1="824.3" y1="120.0" x2="824.3" y2="127.4" stroke="#d8d8d8" stroke-width="1" />
<rect x="811.1999999999999" y="128.4" width="13.3" height="6.7" fill="#efefef" stroke="none" stroke-width="1" rx="0" />
<line x1="811.1999999999999" y1="134.9" x2="824.4999999999999" y2="134.9" stroke="#d8d8d8" stroke-width="1" />
<line x1="824.3" y1="128.4" x2="824.3" y2="135.1" stroke="#d8d8d8" stroke-width="1" />
<path d="M813.8999999999999,125.8 L817.4999999999999,122.10000000000001 L821.0999999999999,125.8 Z" fill="#b0b0b0" stroke="none" stroke-width="1" />
<path d="M813.8999999999999,129.7 L817.4999999999999,133.4 L821.0999999999999,129.7 Z" fill="#b0b0b0" stroke="none" stroke-width="1" />
<text x="771.7" y="131.4" font-family="Liberation Sans" font-size="12.5" font-weight="normal" font-style="normal" fill="#a0a0a0" text-anchor="start" textLength="19.5" lengthAdjust="spacingAndGlyphs" >26.4</text>
<rect x="769.7" y="140.7" width="56.69999999999993" height="18.4" fill="#f0f0f0" stroke="#c4c4c4" stroke-width="1" rx="0" />
<rect x="811.1999999999999" y="142.0" width="13.3" height="7.4" fill="#efefef" stroke="none" stroke-width="1" rx="0" />
<line x1="811.1999999999999" y1="149.20000000000002" x2="824.4999999999999" y2="149.20000000000002" stroke="#d8d8d8" stroke-width="1" />
<line x1="824.3" y1="142.0" x2="824.3" y2="149.4" stroke="#d8d8d8" stroke-width="1" />
<rect x="811.1999999999999" y="150.39999999999998" width="13.3" height="6.7" fill="#efefef" stroke="none" stroke-width="1" rx="0" />
<line x1="811.1999999999999" y1="156.89999999999998" x2="824.4999999999999" y2="156.89999999999998" stroke="#d8d8d8" stroke-width="1" />
<line x1="824.3" y1="150.39999999999998" x2="824.3" y2="157.09999999999997" stroke="#d8d8d8" stroke-width="1" />
<path d="M813.8999999999999,147.79999999999998 L817.4999999999999,144.1 L821.0999999999999,147.79999999999998 Z" fill="#b0b0b0" stroke="none" stroke-width="1" />
<path d="M813.8999999999999,151.7 L817.4999999999999,155.39999999999998 L821.0999999999999,151.7 Z" fill="#b0b0b0" stroke="none" stroke-width="1" />
<text x="771.7" y="153.39999999999998" font-family="Liberation Sans" font-size="12.5" font-weight="normal" font-style="normal" fill="#a0a0a0" text-anchor="start" textLength="19.5" lengthAdjust="spacingAndGlyphs" >26.4</text>
<rect x="769.7" y="162.5" width="56.69999999999993" height="18.4" fill="#f0f0f0" stroke="#c4c4c4" stroke-width="1" rx="0" />
<rect x="811.1999999999999" y="163.8" width="13.3" height="7.4" fill="#efefef" stroke="none" stroke-width="1" rx="0" />
<line x1="811.1999999999999" y1="171.00000000000003" x2="824.4999999999999" y2="171.00000000000003" stroke="#d8d8d8" stroke-width="1" />
<line x1="824.3" y1="163.8" x2="824.3" y2="171.20000000000002" stroke="#d8d8d8" stroke-width="1" />
<rect x="811.1999999999999" y="172.2" width="13.3" height="6.7" fill="#efefef" stroke="none" stroke-width="1" rx="0" />
<line x1="811.1999999999999" y1="178.7" x2="824.4999999999999" y2="178.7" stroke="#d8d8d8" stroke-width="1" />
<line x1="824.3" y1="172.2" x2="824.3" y2="178.89999999999998" stroke="#d8d8d8" stroke-width="1" />
<path d="M813.8999999999999,169.6 L817.4999999999999,165.9 L821.0999999999999,169.6 Z" fill="#b0b0b0" stroke="none" stroke-width="1" />
<path d="M813.8999999999999,173.5 L817.4999999999999,177.2 L821.0999999999999,173.5 Z" fill="#b0b0b0" stroke="none" stroke-width="1" />
<text x="771.7" y="175.2" font-family="Liberation Sans" font-size="12.5" font-weight="normal" font-style="normal" fill="#a0a0a0" text-anchor="start" textLength="14.1" lengthAdjust="spacingAndGlyphs" >0.0</text>
<rect x="941.5" y="69.7" width="56.5" height="18.4" fill="#fff" stroke="#a0a0a8" stroke-width="1" rx="0" />
<rect x="982.8" y="71.0" width="13.3" height="7.4" fill="#f6f6f6" stroke="none" stroke-width="1" rx="0" />
<line x1="982.8" y1="78.2" x2="996.0999999999999" y2="78.2" stroke="#d8d8d8" stroke-width="1" />
<line x1="995.9" y1="71.0" x2="995.9" y2="78.4" stroke="#d8d8d8" stroke-width="1" />
<rect x="982.8" y="79.4" width="13.3" height="6.7" fill="#f6f6f6" stroke="none" stroke-width="1" rx="0" />
<line x1="982.8" y1="85.9" x2="996.0999999999999" y2="85.9" stroke="#d8d8d8" stroke-width="1" />
<line x1="995.9" y1="79.4" x2="995.9" y2="86.10000000000001" stroke="#d8d8d8" stroke-width="1" />
<path d="M985.4999999999999,76.8 L989.0999999999999,73.10000000000001 L992.6999999999999,76.8 Z" fill="#111" stroke="none" stroke-width="1" />
<path d="M985.4999999999999,80.7 L989.0999999999999,84.4 L992.6999999999999,80.7 Z" fill="#111" stroke="none" stroke-width="1" />
<text x="943.5" y="82.4" font-family="Liberation Sans" font-size="12.5" font-weight="normal" font-style="normal" fill="#000" text-anchor="start" textLength="14.1" lengthAdjust="spacingAndGlyphs"  stroke="#000" stroke-width="0.3">0.0</text>
<rect x="941.5" y="91.9" width="56.5" height="18.4" fill="#fff" stroke="#a0a0a8" stroke-width="1" rx="0" />
<rect x="982.8" y="93.2" width="13.3" height="7.4" fill="#f6f6f6" stroke="none" stroke-width="1" rx="0" />
<line x1="982.8" y1="100.4" x2="996.0999999999999" y2="100.4" stroke="#d8d8d8" stroke-width="1" />
<line x1="995.9" y1="93.2" x2="995.9" y2="100.60000000000001" stroke="#d8d8d8" stroke-width="1" />
<rect x="982.8" y="101.60000000000001" width="13.3" height="6.7" fill="#f6f6f6" stroke="none" stroke-width="1" rx="0" />
<line x1="982.8" y1="108.10000000000001" x2="996.0999999999999" y2="108.10000000000001" stroke="#d8d8d8" stroke-width="1" />
<line x1="995.9" y1="101.60000000000001" x2="995.9" y2="108.30000000000001" stroke="#d8d8d8" stroke-width="1" />
<path d="M985.4999999999999,99.0 L989.0999999999999,95.30000000000001 L992.6999999999999,99.0 Z" fill="#111" stroke="none" stroke-width="1" />
<path d="M985.4999999999999,102.9 L989.0999999999999,106.60000000000001 L992.6999999999999,102.9 Z" fill="#111" stroke="none" stroke-width="1" />
<text x="943.5" y="104.60000000000001" font-family="Liberation Sans" font-size="12.5" font-weight="normal" font-style="normal" fill="#000" text-anchor="start" textLength="14.1" lengthAdjust="spacingAndGlyphs"  stroke="#000" stroke-width="0.3">0.0</text>
<text x="721" y="84" font-family="Liberation Sans" font-size="11.5" font-weight="normal" font-style="normal" fill="#1a1a1a" text-anchor="start" textLength="42" lengthAdjust="spacingAndGlyphs"  stroke="#1a1a1a" stroke-width="0.3">Center X</text>
<text x="721" y="106" font-family="Liberation Sans" font-size="11.5" font-weight="normal" font-style="normal" fill="#1a1a1a" text-anchor="start" textLength="42" lengthAdjust="spacingAndGlyphs"  stroke="#1a1a1a" stroke-width="0.3">Center Y</text>
<text x="693.5" y="132.6" font-family="Liberation Sans" font-size="11.5" font-weight="normal" font-style="normal" fill="#1a1a1a" text-anchor="start" textLength="69.5" lengthAdjust="spacingAndGlyphs"  stroke="#1a1a1a" stroke-width="0.3">Major axis (km)</text>
<text x="693.5" y="154.2" font-family="Liberation Sans" font-size="11.5" font-weight="normal" font-style="normal" fill="#1a1a1a" text-anchor="start" textLength="69.5" lengthAdjust="spacingAndGlyphs"  stroke="#1a1a1a" stroke-width="0.3">Minor axis (km)</text>
<text x="711.5" y="175.9" font-family="Liberation Sans" font-size="11.5" font-weight="normal" font-style="normal" fill="#1a1a1a" text-anchor="start" textLength="50.3" lengthAdjust="spacingAndGlyphs"  stroke="#1a1a1a" stroke-width="0.3">Orientation</text>
<text x="900.6" y="84" font-family="Liberation Sans" font-size="11.5" font-weight="normal" font-style="normal" fill="#1a1a1a" text-anchor="start" textLength="34.4" lengthAdjust="spacingAndGlyphs"  stroke="#1a1a1a" stroke-width="0.3">Mass X</text>
<text x="900.6" y="106" font-family="Liberation Sans" font-size="11.5" font-weight="normal" font-style="normal" fill="#1a1a1a" text-anchor="start" textLength="34.4" lengthAdjust="spacingAndGlyphs"  stroke="#1a1a1a" stroke-width="0.3">Mass Y</text>
<rect x="838.8" y="72" width="13" height="13" fill="#0a5ec0" stroke="none" stroke-width="1" rx="3" />
<path d="M842.0999999999999,78.8 L844.4,81 L848.5999999999999,76.3" fill="none" stroke="#fff" stroke-width="1.1" />
<rect x="838.8" y="94" width="13" height="13" fill="#0a5ec0" stroke="none" stroke-width="1" rx="3" />
<path d="M842.0999999999999,100.8 L844.4,103 L848.5999999999999,98.3" fill="none" stroke="#fff" stroke-width="1.1" />
<text x="858" y="83" font-family="Liberation Sans" font-size="12.5" font-weight="normal" font-style="normal" fill="#1a1a1a" text-anchor="start" textLength="17" lengthAdjust="spacingAndGlyphs"  stroke="#1a1a1a" stroke-width="0.3">-5.1</text>
<text x="858" y="103" font-family="Liberation Sans" font-size="11" font-weight="normal" font-style="normal" fill="#1a1a1a" text-anchor="start" textLength="9" lengthAdjust="spacingAndGlyphs"  stroke="#1a1a1a" stroke-width="0.3">---</text>
<rect x="839.5" y="122.0" width="12" height="12" fill="#f7f7f7" stroke="#cacaca" stroke-width="1" rx="3" />
<rect x="839.5" y="144.0" width="12" height="12" fill="#f7f7f7" stroke="#cacaca" stroke-width="1" rx="3" />
<rect x="839.5" y="166.1" width="12" height="12" fill="#f7f7f7" stroke="#cacaca" stroke-width="1" rx="3" />
<text x="858.2" y="132" font-family="Liberation Sans" font-size="12.5" font-weight="normal" font-style="normal" fill="#a8a8a8" text-anchor="start" textLength="14.5" lengthAdjust="spacingAndGlyphs" >0.0</text>
<text x="858.2" y="154.2" font-family="Liberation Sans" font-size="12.5" font-weight="normal" font-style="normal" fill="#a8a8a8" text-anchor="start" textLength="14.5" lengthAdjust="spacingAndGlyphs" >0.0</text>
<text x="858.2" y="176.3" font-family="Liberation Sans" font-size="12.5" font-weight="normal" font-style="normal" fill="#a8a8a8" text-anchor="start" textLength="14.5" lengthAdjust="spacingAndGlyphs" >0.0</text>
<text x="933" y="119.5" font-family="Liberation Sans" font-size="8" font-weight="normal" font-style="normal" fill="#a8a8a8" text-anchor="start" textLength="43.5" lengthAdjust="spacingAndGlyphs" >Shape model</text>
<rect x="984.5" y="112.0" width="12" height="12" fill="#f6f6f6" stroke="#c8c8c8" stroke-width="1" rx="3" />
<text x="915" y="136" font-family="Liberation Sans" font-size="11.5" font-weight="normal" font-style="normal" fill="#008000" text-anchor="start" textLength="63" lengthAdjust="spacingAndGlyphs"  stroke="#008000" stroke-width="0.3">dia = 26.4 km</text>
<text x="896" y="149.7" font-family="Liberation Sans" font-size="11.5" font-weight="normal" font-style="normal" fill="#1010ff" text-anchor="start" textLength="101.6" lengthAdjust="spacingAndGlyphs"  stroke="#1010ff" stroke-width="0.3">a/b: 1.00, dMag: 0.00</text>
<text x="900.6" y="179.7" font-family="Liberation Sans" font-size="11.5" font-weight="normal" font-style="normal" fill="#1a1a1a" text-anchor="start" textLength="82" lengthAdjust="spacingAndGlyphs"  stroke="#1a1a1a" stroke-width="0.3">Motion: 4.47 km/s</text>
<rect x="837" y="181.7" width="17.4" height="6.8" fill="#fafafa" stroke="#dadada" stroke-width="1" rx="3.4" />
<line x1="839.5" y1="185" x2="852" y2="185" stroke="#ff0000" stroke-width="1.8" />
<rect x="673" y="192" width="13" height="13" fill="#0a5ec0" stroke="none" stroke-width="1" rx="3" />
<path d="M676.3,198.8 L678.6,201 L682.8,196.3" fill="none" stroke="#fff" stroke-width="1.1" />
<text x="691.7" y="202.7" font-family="Liberation Sans" font-size="11.5" font-weight="normal" font-style="normal" fill="#1a1a1a" text-anchor="start" textLength="35.3" lengthAdjust="spacingAndGlyphs"  stroke="#1a1a1a" stroke-width="0.3">Circular</text>
<rect x="739" y="192" width="13" height="13" fill="#0a5ec0" stroke="none" stroke-width="1" rx="3" />
<path d="M742.3,198.8 L744.6,201 L748.8,196.3" fill="none" stroke="#fff" stroke-width="1.1" />
<text x="758" y="196" font-family="Liberation Sans" font-size="10.5" font-weight="normal" font-style="normal" fill="#1a1a1a" text-anchor="start" textLength="62" lengthAdjust="spacingAndGlyphs"  stroke="#1a1a1a" stroke-width="0.3">Use assumed</text>
<text x="758" y="208.5" font-family="Liberation Sans" font-size="10.5" font-weight="normal" font-style="normal" fill="#1a1a1a" text-anchor="start" textLength="59.7" lengthAdjust="spacingAndGlyphs"  stroke="#1a1a1a" stroke-width="0.3">dia (26.4 km)</text>
<rect x="841.5" y="192.5" width="12" height="12" fill="#fbfbfb" stroke="#333" stroke-width="1" rx="3" />
<text x="860.4" y="202.6" font-family="Liberation Sans" font-size="11.5" font-weight="normal" font-style="normal" fill="#1a1a1a" text-anchor="start" textLength="92.6" lengthAdjust="spacingAndGlyphs"  stroke="#1a1a1a" stroke-width="0.3">Include Miss events</text>
<rect x="671.2" y="218.2" width="321.5" height="20.3" fill="#f0f0f0" stroke="none" stroke-width="1" rx="0" />
<path d="M672,238.5 V219 H992.7" fill="none" stroke="#707070" stroke-width="2" />
<path d="M671.5,238 H992.5 V219" fill="none" stroke="#fff" stroke-width="1" />
<text x="679.7" y="233" font-family="Liberation Sans" font-size="12" font-weight="bold" font-style="normal" fill="#a8a8a8" text-anchor="start" textLength="110.3" lengthAdjust="spacingAndGlyphs" >Double stars - show</text>
<circle cx="811.3" cy="229.7" r="5.6" fill="#f0f0f0" stroke="#c4c4c4" stroke-width="1.8"/>
<circle cx="811.3" cy="229.7" r="2.2" fill="#c4c4c4"/>
<text x="823.3" y="233.6" font-family="Liberation Sans" font-size="10" font-weight="normal" font-style="normal" fill="#a8a8a8" text-anchor="start" textLength="18.7" lengthAdjust="spacingAndGlyphs" >Both</text>
<circle cx="863.5" cy="229.7" r="5.8" fill="#f4f4f4" stroke="#c8c8c8" stroke-width="1"/>
<text x="875" y="233.6" font-family="Liberation Sans" font-size="10" font-weight="normal" font-style="normal" fill="#a8a8a8" text-anchor="start" textLength="31.8" lengthAdjust="spacingAndGlyphs" >Primary</text>
<circle cx="928" cy="229.7" r="5.8" fill="#f4f4f4" stroke="#c8c8c8" stroke-width="1"/>
<text x="940.3" y="233.6" font-family="Liberation Sans" font-size="10" font-weight="normal" font-style="normal" fill="#a8a8a8" text-anchor="start" textLength="43.2" lengthAdjust="spacingAndGlyphs" >Secondary</text>
<text x="671" y="261.5" font-family="Liberation Sans" font-size="13" font-weight="bold" font-style="normal" fill="#006400" text-anchor="start" textLength="100.5" lengthAdjust="spacingAndGlyphs"  stroke="#006400" stroke-width="0.3">Quality of the fit</text>
<rect x="777.5" y="245.5" width="216" height="19.8" fill="#fff" stroke="#7a7a7a" stroke-width="1" rx="1.5" />
<text x="779.7" y="259" font-family="Liberation Sans" font-size="11.5" font-weight="normal" font-style="normal" fill="#000" text-anchor="start" textLength="148" lengthAdjust="spacingAndGlyphs"  stroke="#000" stroke-width="0.3">Astrometry only. No reliable size</text>
<path d="M980.5,253 L985,257.5 L989.5,253" fill="none" stroke="#333" stroke-width="1" />
<text x="697.4" y="281.8" font-family="Liberation Sans" font-size="12" font-weight="bold" font-style="normal" fill="#8b0000" text-anchor="start" textLength="72.3" lengthAdjust="spacingAndGlyphs"  stroke="#8b0000" stroke-width="0.3">Review flags</text>
<rect x="777" y="266.8" width="215.7" height="19.7" fill="#e0ffff" stroke="none" stroke-width="1" rx="0" />
<path d="M777.8,286.5 V267.6 H992.7" fill="none" stroke="#808080" stroke-width="1.6" />
<rect x="782.2" y="272.2" width="12" height="12" fill="#fbfbfb" stroke="#333" stroke-width="1" rx="3" />
<text x="801" y="282" font-family="Liberation Sans" font-size="12.5" font-weight="normal" font-style="normal" fill="#000" text-anchor="start" textLength="157" lengthAdjust="spacingAndGlyphs"  stroke="#000" stroke-width="0.3">0 items are tagged for review</text>
<rect x="662" y="289.4" width="338.8" height="81.2" fill="#f0ffff" stroke="none" stroke-width="1" rx="0" />
<path d="M663,370.6 V290.4 H1000.8" fill="none" stroke="#696969" stroke-width="2" />
<path d="M662.5,370.3 H1000.5 V290" fill="none" stroke="#e4e4e4" stroke-width="1" />
<text x="674" y="316" font-family="Liberation Sans" font-size="13" font-weight="bold" font-style="normal" fill="#800000" text-anchor="middle"  stroke="#800000" stroke-width="0.3">P</text>
<text x="674" y="328" font-family="Liberation Sans" font-size="13" font-weight="bold" font-style="normal" fill="#800000" text-anchor="middle"  stroke="#800000" stroke-width="0.3">L</text>
<text x="674" y="341" font-family="Liberation Sans" font-size="13" font-weight="bold" font-style="normal" fill="#800000" text-anchor="middle"  stroke="#800000" stroke-width="0.3">O</text>
<text x="674" y="354" font-family="Liberation Sans" font-size="13" font-weight="bold" font-style="normal" fill="#800000" text-anchor="middle"  stroke="#800000" stroke-width="0.3">T</text>
<text x="690.3" y="311.5" font-family="Liberation Sans" font-size="12" font-weight="bold" font-style="normal" fill="#800000" text-anchor="start" textLength="31.4" lengthAdjust="spacingAndGlyphs"  stroke="#800000" stroke-width="0.3">Scale</text>
<rect x="729" y="298" width="269" height="18.8" fill="#fbf5c8" stroke="none" stroke-width="1" rx="0" />
<rect x="733" y="303.5" width="259" height="3" fill="#e6e6e6" stroke="#d4d4d4" stroke-width="0.8" rx="0" />
<line x1="737.6" y1="313" x2="737.6" y2="316.4" stroke="#909090" stroke-width="1" />
<line x1="750.2" y1="313" x2="750.2" y2="316.4" stroke="#909090" stroke-width="1" />
<line x1="762.8000000000001" y1="313" x2="762.8000000000001" y2="316.4" stroke="#909090" stroke-width="1" />
<line x1="775.4" y1="313" x2="775.4" y2="316.4" stroke="#909090" stroke-width="1" />
<line x1="788.0" y1="313" x2="788.0" y2="316.4" stroke="#909090" stroke-width="1" />
<line x1="800.6" y1="313" x2="800.6" y2="316.4" stroke="#909090" stroke-width="1" />
<line x1="813.2" y1="313" x2="813.2" y2="316.4" stroke="#909090" stroke-width="1" />
<line x1="825.8000000000001" y1="313" x2="825.8000000000001" y2="316.4" stroke="#909090" stroke-width="1" />
<line x1="838.4" y1="313" x2="838.4" y2="316.4" stroke="#909090" stroke-width="1" />
<line x1="851.0" y1="313" x2="851.0" y2="316.4" stroke="#909090" stroke-width="1" />
<line x1="863.6" y1="313" x2="863.6" y2="316.4" stroke="#909090" stroke-width="1" />
<line x1="876.2" y1="313" x2="876.2" y2="316.4" stroke="#909090" stroke-width="1" />
<line x1="888.8" y1="313" x2="888.8" y2="316.4" stroke="#909090" stroke-width="1" />
<line x1="901.4" y1="313" x2="901.4" y2="316.4" stroke="#909090" stroke-width="1" />
<line x1="914.0" y1="313" x2="914.0" y2="316.4" stroke="#909090" stroke-width="1" />
<line x1="926.6" y1="313" x2="926.6" y2="316.4" stroke="#909090" stroke-width="1" />
<line x1="939.2" y1="313" x2="939.2" y2="316.4" stroke="#909090" stroke-width="1" />
<line x1="951.8" y1="313" x2="951.8" y2="316.4" stroke="#909090" stroke-width="1" />
<line x1="964.4" y1="313" x2="964.4" y2="316.4" stroke="#909090" stroke-width="1" />
<line x1="977.0" y1="313" x2="977.0" y2="316.4" stroke="#909090" stroke-width="1" />
<line x1="989.6" y1="313" x2="989.6" y2="316.4" stroke="#909090" stroke-width="1" />
<path d="M864.4,301 H871.5 V308 L868,311 L864.4,308 Z" fill="#0078d7" stroke="none" stroke-width="1" />
<text x="690.3" y="337.6" font-family="Liberation Sans" font-size="12" font-weight="bold" font-style="normal" fill="#800000" text-anchor="start" textLength="23" lengthAdjust="spacingAndGlyphs"  stroke="#800000" stroke-width="0.3">Size</text>
<rect x="720.3" y="323.5" width="162.3" height="21.8" fill="#f0fff0" stroke="none" stroke-width="1" rx="0" />
<path d="M721.3,345.3 V324.5 H882.6" fill="none" stroke="#696969" stroke-width="2" />
<path d="M720.8,345 H882.3 V324" fill="none" stroke="#e8e8e8" stroke-width="1" />
<circle cx="736.5" cy="334.4" r="4.9" fill="#fff" stroke="#0067c0" stroke-width="3.4"/>
<text x="748.5" y="339" font-family="Liberation Sans" font-size="12" font-weight="bold" font-style="normal" fill="#3c0010" text-anchor="start" textLength="36.7" lengthAdjust="spacingAndGlyphs"  stroke="#3c0010" stroke-width="0.3">normal</text>
<circle cx="800.4" cy="334.4" r="5.8" fill="#f8f8f8" stroke="#333" stroke-width="1"/>
<text x="812.4" y="339" font-family="Liberation Sans" font-size="12" font-weight="bold" font-style="normal" fill="#3c0010" text-anchor="start" textLength="17.3" lengthAdjust="spacingAndGlyphs"  stroke="#3c0010" stroke-width="0.3">x 2</text>
<circle cx="844.4" cy="334.4" r="5.8" fill="#f8f8f8" stroke="#333" stroke-width="1"/>
<text x="856.5" y="339" font-family="Liberation Sans" font-size="12" font-weight="bold" font-style="normal" fill="#3c0010" text-anchor="start" textLength="17.6" lengthAdjust="spacingAndGlyphs"  stroke="#3c0010" stroke-width="0.3">x 5</text>
<text x="905.5" y="338.3" font-family="Liberation Sans" font-size="12" font-weight="bold" font-style="normal" fill="#800080" text-anchor="start" textLength="71" lengthAdjust="spacingAndGlyphs"  stroke="#800080" stroke-width="0.3">Form opacity</text>
<text x="691" y="363.5" font-family="Liberation Sans" font-size="12" font-weight="bold" font-style="normal" fill="#800000" text-anchor="start" textLength="103.4" lengthAdjust="spacingAndGlyphs"  stroke="#800000" stroke-width="0.3">Scroll range x1.25</text>
<rect x="802.8" y="354.3" width="11.5" height="11.5" fill="#fbfbfb" stroke="#333" stroke-width="1" rx="3" />
<rect x="883.8" y="346" width="115.2" height="20.5" fill="#fbf5c8" stroke="none" stroke-width="1" rx="0" />
<rect x="890" y="352.5" width="101.5" height="3" fill="#e6e6e6" stroke="#d4d4d4" stroke-width="0.8" rx="0" />
<line x1="894.4" y1="362.6" x2="894.4" y2="366" stroke="#909090" stroke-width="1" />
<line x1="913.3" y1="362.6" x2="913.3" y2="366" stroke="#909090" stroke-width="1" />
<line x1="932.3" y1="362.6" x2="932.3" y2="366" stroke="#909090" stroke-width="1" />
<line x1="950.9" y1="362.6" x2="950.9" y2="366" stroke="#909090" stroke-width="1" />
<line x1="969.4" y1="362.6" x2="969.4" y2="366" stroke="#909090" stroke-width="1" />
<line x1="988.5" y1="362.6" x2="988.5" y2="366" stroke="#909090" stroke-width="1" />
<path d="M983.5,347.6 H992 V357.5 L987.7,360.5 L983.5,357.5 Z" fill="#0078d7" stroke="none" stroke-width="1" />
<text x="676.2" y="392.6" font-family="Liberation Sans" font-size="11.5" font-weight="normal" font-style="normal" fill="#1a1a1a" text-anchor="start" textLength="96" lengthAdjust="spacingAndGlyphs"  stroke="#1a1a1a" stroke-width="0.3">RMS fit -2.3 ±0.5 km</text>
<rect x="668.8" y="402.3" width="326.2" height="268" fill="#fff" stroke="none" stroke-width="1" rx="0" />
<path d="M669.8,670.2 V403.3 H995" fill="none" stroke="#6d6d6d" stroke-width="2" />
<path d="M669,669.7 H994.5 V403" fill="none" stroke="#e4e4e4" stroke-width="1" />
<line x1="675.3" y1="411" x2="741" y2="411" stroke="#4b0082" stroke-width="2.2" />
<line x1="675.3" y1="422.6" x2="741" y2="422.6" stroke="#ff0000" stroke-width="2.2" />
<circle cx="677.4" cy="435.6" r="1.7" fill="#555" stroke="#222" stroke-width="0.8"/>
<circle cx="692.4" cy="435.6" r="1.7" fill="#555" stroke="#222" stroke-width="0.8"/>
<circle cx="707.4" cy="435.6" r="1.7" fill="#555" stroke="#222" stroke-width="0.8"/>
<circle cx="722.4" cy="435.6" r="1.7" fill="#555" stroke="#222" stroke-width="0.8"/>
<circle cx="737.4" cy="435.6" r="1.7" fill="#555" stroke="#222" stroke-width="0.8"/>
<clipPath id="legclip"><rect x="671" y="404" width="322" height="250"/></clipPath><g clip-path="url(#legclip)">
<text x="763" y="415.5" font-family="Liberation Mono" font-size="13.7" font-weight="normal" font-style="normal" fill="#000" text-anchor="start" xml:space="preserve">1    Hidehito Yamamura, near</text>
<text x="763" y="427.5" font-family="Liberation Mono" font-size="13.7" font-weight="normal" font-style="normal" fill="#000" text-anchor="start" xml:space="preserve">2    Hiroshi Kishimoto, near</text>
<text x="763" y="439.5" font-family="Liberation Mono" font-size="13.7" font-weight="normal" font-style="normal" fill="#000" text-anchor="start" xml:space="preserve">3(P) Predicted</text>
</g>
<rect x="670.8" y="653.9" width="322.2" height="16.3" fill="#f0f0f0" stroke="none" stroke-width="1" rx="0" />
<rect x="686.6" y="658.9" width="197.4" height="6.3" fill="#858585" stroke="none" stroke-width="1" rx="3.1" />
<path d="M681,657.7 L675.5,661.7 L681,665.7 Z" fill="#858585" stroke="none" stroke-width="1" />
<path d="M983.5,657.7 L989,661.7 L983.5,665.7 Z" fill="#858585" stroke="none" stroke-width="1" />
<rect x="541.3" y="501.6" width="448.7" height="131.4" fill="#b0c4de" stroke="#5a5a5a" stroke-width="1.5" rx="0" />
<text x="544" y="518.5" font-family="Liberation Sans" font-size="13" font-weight="bold" font-style="normal" fill="#1f3a6a" text-anchor="start" textLength="37.3" lengthAdjust="spacingAndGlyphs"  stroke="#1f3a6a" stroke-width="0.3">DAMIT</text>
<rect x="588.5" y="506.5" width="14" height="15.0" fill="#ffffff" stroke="none" stroke-width="1" rx="3.5" />
<rect x="590.5" y="508.5" width="10" height="11.0" fill="#00e000" stroke="none" stroke-width="1" rx="1.5" />
<text x="595.5" y="518.0" font-family="Liberation Sans" font-size="12" font-weight="bold" font-style="normal" fill="#000" text-anchor="middle"  stroke="#000" stroke-width="0.3">1</text>
<rect x="605.8" y="506.5" width="14" height="15.0" fill="#ffffff" stroke="none" stroke-width="1" rx="3.5" />
<rect x="607.8" y="508.5" width="10" height="11.0" fill="#ececec" stroke="none" stroke-width="1" rx="1.5" />
<text x="612.8" y="518.0" font-family="Liberation Sans" font-size="11.5" font-weight="normal" font-style="normal" fill="#b4b4b4" text-anchor="middle" >2</text>
<rect x="623.7" y="506.5" width="14" height="15.0" fill="#ffffff" stroke="none" stroke-width="1" rx="3.5" />
<rect x="625.7" y="508.5" width="10" height="11.0" fill="#ececec" stroke="none" stroke-width="1" rx="1.5" />
<text x="630.7" y="518.0" font-family="Liberation Sans" font-size="11.5" font-weight="normal" font-style="normal" fill="#b4b4b4" text-anchor="middle" >3</text>
<rect x="641.8" y="506.5" width="14" height="15.0" fill="#ffffff" stroke="none" stroke-width="1" rx="3.5" />
<rect x="643.8" y="508.5" width="10" height="11.0" fill="#ececec" stroke="none" stroke-width="1" rx="1.5" />
<text x="648.8" y="518.0" font-family="Liberation Sans" font-size="11.5" font-weight="normal" font-style="normal" fill="#b4b4b4" text-anchor="middle" >4</text>
<rect x="659.5" y="506.5" width="14" height="15.0" fill="#ffffff" stroke="none" stroke-width="1" rx="3.5" />
<rect x="661.5" y="508.5" width="10" height="11.0" fill="#ececec" stroke="none" stroke-width="1" rx="1.5" />
<text x="666.5" y="518.0" font-family="Liberation Sans" font-size="11.5" font-weight="normal" font-style="normal" fill="#b4b4b4" text-anchor="middle" >5</text>
<rect x="677.6" y="506.5" width="14" height="15.0" fill="#ffffff" stroke="none" stroke-width="1" rx="3.5" />
<rect x="679.6" y="508.5" width="10" height="11.0" fill="#ececec" stroke="none" stroke-width="1" rx="1.5" />
<text x="684.6" y="518.0" font-family="Liberation Sans" font-size="11.5" font-weight="normal" font-style="normal" fill="#b4b4b4" text-anchor="middle" >6</text>
<rect x="699.4" y="506.8" width="68.2" height="14.6" fill="#fff" stroke="none" stroke-width="1" rx="3" />
<rect x="701.4" y="508.8" width="64.2" height="10.6" fill="#b0e4ec" stroke="none" stroke-width="1" rx="1" />
<text x="704" y="518.3" font-family="Liberation Sans" font-size="11.5" font-weight="normal" font-style="normal" fill="#111" text-anchor="start" textLength="58" lengthAdjust="spacingAndGlyphs"  stroke="#111" stroke-width="0.3">Light curves</text>
<text x="776" y="518.5" font-family="Liberation Sans" font-size="13" font-weight="bold" font-style="normal" fill="#1f3a6a" text-anchor="start" textLength="28.7" lengthAdjust="spacingAndGlyphs"  stroke="#1f3a6a" stroke-width="0.3">ISAM</text>
<rect x="811.3" y="506" width="15" height="15" fill="#ffffff" stroke="none" stroke-width="1" rx="3.5" />
<rect x="813.3" y="508" width="11" height="11" fill="#ececec" stroke="none" stroke-width="1" rx="1.5" />
<text x="818.8" y="517.5" font-family="Liberation Sans" font-size="11.5" font-weight="normal" font-style="normal" fill="#b4b4b4" text-anchor="middle" >1</text>
<rect x="835.3" y="506" width="15" height="15" fill="#ffffff" stroke="none" stroke-width="1" rx="3.5" />
<rect x="837.3" y="508" width="11" height="11" fill="#ececec" stroke="none" stroke-width="1" rx="1.5" />
<text x="842.8" y="517.5" font-family="Liberation Sans" font-size="11.5" font-weight="normal" font-style="normal" fill="#b4b4b4" text-anchor="middle" >2</text>
<rect x="859.5" y="506" width="15" height="15" fill="#ffffff" stroke="none" stroke-width="1" rx="3.5" />
<rect x="861.5" y="508" width="11" height="11" fill="#ececec" stroke="none" stroke-width="1" rx="1.5" />
<text x="867" y="517.5" font-family="Liberation Sans" font-size="11.5" font-weight="normal" font-style="normal" fill="#b4b4b4" text-anchor="middle" >3</text>
<rect x="883.1" y="506" width="15" height="15" fill="#ffffff" stroke="none" stroke-width="1" rx="3.5" />
<rect x="885.1" y="508" width="11" height="11" fill="#ececec" stroke="none" stroke-width="1" rx="1.5" />
<text x="890.6" y="517.5" font-family="Liberation Sans" font-size="11.5" font-weight="normal" font-style="normal" fill="#b4b4b4" text-anchor="middle" >4</text>
<rect x="907.1" y="506" width="15" height="15" fill="#ffffff" stroke="none" stroke-width="1" rx="3.5" />
<rect x="909.1" y="508" width="11" height="11" fill="#ececec" stroke="none" stroke-width="1" rx="1.5" />
<text x="914.6" y="517.5" font-family="Liberation Sans" font-size="11.5" font-weight="normal" font-style="normal" fill="#b4b4b4" text-anchor="middle" >5</text>
<rect x="931.3" y="506" width="15" height="15" fill="#ffffff" stroke="none" stroke-width="1" rx="3.5" />
<rect x="933.3" y="508" width="11" height="11" fill="#ececec" stroke="none" stroke-width="1" rx="1.5" />
<text x="938.8" y="517.5" font-family="Liberation Sans" font-size="11.5" font-weight="normal" font-style="normal" fill="#b4b4b4" text-anchor="middle" >6</text>
<rect x="955.5" y="504.8" width="14.5" height="15.5" fill="#fff" stroke="none" stroke-width="1" rx="2" />
<rect x="957" y="506.3" width="11.5" height="12.5" fill="#2a2ac8" stroke="none" stroke-width="1" rx="0" />
<text x="962.7" y="517.3" font-family="Liberation Sans" font-size="12" font-weight="bold" font-style="normal" fill="#ffe000" text-anchor="middle"  stroke="#ffe000" stroke-width="0.3">?</text>
<rect x="972" y="504.8" width="14.5" height="15.5" fill="#fff" stroke="none" stroke-width="1" rx="2" />
<rect x="973.5" y="506.3" width="11.5" height="12.5" fill="#e0102a" stroke="none" stroke-width="1" rx="0" />
<text x="979.2" y="517.3" font-family="Liberation Sans" font-size="11.5" font-weight="bold" font-style="normal" fill="#fff" text-anchor="middle"  stroke="#fff" stroke-width="0.3">X</text>
<text x="549.3" y="535" font-family="Liberation Sans" font-size="11.5" font-weight="normal" font-style="normal" fill="#333" text-anchor="start" textLength="33" lengthAdjust="spacingAndGlyphs"  stroke="#333" stroke-width="0.3">Source</text>
<text x="608" y="535" font-family="Liberation Sans" font-size="11.5" font-weight="normal" font-style="normal" fill="#333" text-anchor="start" textLength="9" lengthAdjust="spacingAndGlyphs"  stroke="#333" stroke-width="0.3">ID</text>
<text x="642.5" y="535" font-family="Liberation Sans" font-size="11.5" font-weight="normal" font-style="normal" fill="#333" text-anchor="start" textLength="37.5" lengthAdjust="spacingAndGlyphs"  stroke="#333" stroke-width="0.3">Surf/Vol</text>
<rect x="546.5" y="538.5" width="38.799999999999955" height="18.100000000000023" fill="#efefef" stroke="none" stroke-width="1" rx="0" />
<line x1="546.5" y1="556.1" x2="585.3" y2="556.1" stroke="#8a9ab0" stroke-width="1" />
<line x1="584.8" y1="538.5" x2="584.8" y2="556.6" stroke="#d0d8e4" stroke-width="1" />
<text x="549.3" y="552.0" font-family="Liberation Sans" font-size="12" font-weight="normal" font-style="normal" fill="#111" text-anchor="start" textLength="33" lengthAdjust="spacingAndGlyphs"  stroke="#111" stroke-width="0.3">DAMIT</text>
<rect x="587" y="538.5" width="53" height="18.100000000000023" fill="#efefef" stroke="none" stroke-width="1" rx="0" />
<line x1="587" y1="556.1" x2="640" y2="556.1" stroke="#8a9ab0" stroke-width="1" />
<line x1="639.5" y1="538.5" x2="639.5" y2="556.6" stroke="#d0d8e4" stroke-width="1" />
<text x="589.8" y="552.0" font-family="Liberation Sans" font-size="12" font-weight="normal" font-style="normal" fill="#111" text-anchor="start" textLength="17.5" lengthAdjust="spacingAndGlyphs"  stroke="#111" stroke-width="0.3">871</text>
<rect x="642.5" y="538.5" width="37.5" height="18.100000000000023" fill="#efefef" stroke="none" stroke-width="1" rx="0" />
<line x1="642.5" y1="556.1" x2="680" y2="556.1" stroke="#8a9ab0" stroke-width="1" />
<line x1="679.5" y1="538.5" x2="679.5" y2="556.6" stroke="#d0d8e4" stroke-width="1" />
<text x="645.3" y="552.0" font-family="Liberation Sans" font-size="12" font-weight="normal" font-style="normal" fill="#111" text-anchor="start" textLength="27" lengthAdjust="spacingAndGlyphs"  stroke="#111" stroke-width="0.3">1.122</text>
<rect x="544.6" y="558.5" width="32.9" height="19.3" fill="#ffff00" stroke="#222" stroke-width="1" rx="0" />
<text x="552" y="573" font-family="Liberation Sans" font-size="12.5" font-weight="bold" font-style="normal" fill="#000" text-anchor="start" textLength="18.5" lengthAdjust="spacingAndGlyphs"  stroke="#000" stroke-width="0.3">Dia</text>
<text x="582.2" y="570.8" font-family="Liberation Sans" font-size="11.5" font-weight="normal" font-style="italic" fill="#3a4866" text-anchor="start" textLength="95.8" lengthAdjust="spacingAndGlyphs"  stroke="#3a4866" stroke-width="0.3">Values in memory =&gt;</text>
<rect x="683" y="525" width="300.5" height="48" fill="#fdf8d0" stroke="none" stroke-width="1" rx="0" />
<path d="M683.8,573 V525.8 H983.5" fill="none" stroke="#6a6a6a" stroke-width="1.6" />
<text x="706" y="535.5" font-family="Liberation Sans" font-size="11.5" font-weight="normal" font-style="normal" fill="#111" text-anchor="start" textLength="42.8" lengthAdjust="spacingAndGlyphs"  stroke="#111" stroke-width="0.3">Fit quality</text>
<rect x="685.8" y="540.5" width="95.8" height="18.5" fill="#fff" stroke="#7a7a7a" stroke-width="1" rx="1.5" />
<text x="688.5" y="554" font-family="Liberation Sans" font-size="12" font-weight="normal" font-style="normal" fill="#000" text-anchor="start" textLength="31.5" lengthAdjust="spacingAndGlyphs"  stroke="#000" stroke-width="0.3">Poor fit</text>
<path d="M769,547 L773.5,551.5 L778,547" fill="none" stroke="#333" stroke-width="1" />
<text x="687.5" y="570.3" font-family="Liberation Sans" font-size="12" font-weight="normal" font-style="normal" fill="#4b0082" text-anchor="start" textLength="31.5" lengthAdjust="spacingAndGlyphs"  stroke="#4b0082" stroke-width="0.3">Poor fit</text>
<text x="784.7" y="535.5" font-family="Liberation Sans" font-size="11.5" font-weight="normal" font-style="normal" fill="#111" text-anchor="start" textLength="39.3" lengthAdjust="spacingAndGlyphs"  stroke="#111" stroke-width="0.3">Ph Corr</text>
<rect x="786.4" y="540" width="37.60000000000002" height="17.399999999999977" fill="#ececec" stroke="none" stroke-width="1" rx="0" />
<line x1="786.4" y1="556.9" x2="824" y2="556.9" stroke="#8a9ab0" stroke-width="1" />
<line x1="823.5" y1="540" x2="823.5" y2="557.4" stroke="#d0d8e4" stroke-width="1" />
<text x="789.1999999999999" y="552.8" font-family="Liberation Sans" font-size="12" font-weight="normal" font-style="normal" fill="#111" text-anchor="start" textLength="10.5" lengthAdjust="spacingAndGlyphs"  stroke="#111" stroke-width="0.3">0°</text>
<text x="788.2" y="570.3" font-family="Liberation Sans" font-size="12" font-weight="normal" font-style="normal" fill="#4b0082" text-anchor="start" textLength="10" lengthAdjust="spacingAndGlyphs"  stroke="#4b0082" stroke-width="0.3">0°</text>
<text x="835.3" y="535.5" font-family="Liberation Sans" font-size="11.5" font-weight="normal" font-style="normal" fill="#111" text-anchor="start" textLength="57" lengthAdjust="spacingAndGlyphs"  stroke="#111" stroke-width="0.3">Minimum dia</text>
<rect x="833" y="539.6" width="37" height="18.399999999999977" fill="#ececec" stroke="none" stroke-width="1" rx="0" />
<line x1="833" y1="557.5" x2="870" y2="557.5" stroke="#8a9ab0" stroke-width="1" />
<line x1="869.5" y1="539.6" x2="869.5" y2="558" stroke="#d0d8e4" stroke-width="1" />
<text x="835.8" y="553.4" font-family="Liberation Sans" font-size="12" font-weight="normal" font-style="normal" fill="#111" text-anchor="start" textLength="18.5" lengthAdjust="spacingAndGlyphs"  stroke="#111" stroke-width="0.3">21.1</text>
<text x="834.8" y="570.3" font-family="Liberation Sans" font-size="12" font-weight="normal" font-style="normal" fill="#4b0082" text-anchor="start" textLength="19.5" lengthAdjust="spacingAndGlyphs"  stroke="#4b0082" stroke-width="0.3">21.1</text>
<text x="911.8" y="535.5" font-family="Liberation Sans" font-size="11.5" font-weight="normal" font-style="normal" fill="#111" text-anchor="start" textLength="59.5" lengthAdjust="spacingAndGlyphs"  stroke="#111" stroke-width="0.3">Maximum dia</text>
<rect x="910.6" y="539.6" width="37.60000000000002" height="18.399999999999977" fill="#ececec" stroke="none" stroke-width="1" rx="0" />
<line x1="910.6" y1="557.5" x2="948.2" y2="557.5" stroke="#8a9ab0" stroke-width="1" />
<line x1="947.7" y1="539.6" x2="947.7" y2="558" stroke="#d0d8e4" stroke-width="1" />
<text x="913.4" y="553.4" font-family="Liberation Sans" font-size="12" font-weight="normal" font-style="normal" fill="#111" text-anchor="start" textLength="19.5" lengthAdjust="spacingAndGlyphs"  stroke="#111" stroke-width="0.3">25.6</text>
<text x="913.4" y="570.3" font-family="Liberation Sans" font-size="12" font-weight="normal" font-style="normal" fill="#4b0082" text-anchor="start" textLength="20" lengthAdjust="spacingAndGlyphs"  stroke="#4b0082" stroke-width="0.3">25.6</text>
<rect x="873" y="539.7" width="29.4" height="22.3" fill="#fff" stroke="none" stroke-width="1" rx="3.5" />
<rect x="875" y="541.7" width="25.4" height="18.3" fill="#a4f020" stroke="none" stroke-width="1" rx="1.5" />
<text x="887.7" y="556" font-family="Liberation Sans" font-size="12" font-weight="normal" font-style="normal" fill="#111" text-anchor="middle" textLength="16" lengthAdjust="spacingAndGlyphs"  stroke="#111" stroke-width="0.3">Set</text>
<rect x="951" y="539.7" width="29.4" height="22.3" fill="#fff" stroke="none" stroke-width="1" rx="3.5" />
<rect x="953" y="541.7" width="25.4" height="18.3" fill="#a4f020" stroke="none" stroke-width="1" rx="1.5" />
<text x="965.7" y="556" font-family="Liberation Sans" font-size="12" font-weight="normal" font-style="normal" fill="#111" text-anchor="middle" textLength="16" lengthAdjust="spacingAndGlyphs"  stroke="#111" stroke-width="0.3">Set</text>
<text x="549.3" y="590.7" font-family="Liberation Sans" font-size="11.5" font-weight="normal" font-style="normal" fill="#333" text-anchor="start" textLength="53.6" lengthAdjust="spacingAndGlyphs"  stroke="#333" stroke-width="0.3">Version info</text>
<rect x="609.5" y="579" width="269.29999999999995" height="17.399999999999977" fill="#eeeeee" stroke="none" stroke-width="1" rx="0" />
<line x1="609.5" y1="595.9" x2="878.8" y2="595.9" stroke="#8a9ab0" stroke-width="1" />
<line x1="878.3" y1="579" x2="878.3" y2="596.4" stroke="#d0d8e4" stroke-width="1" />
<text x="612.3" y="591.8" font-family="Liberation Sans" font-size="12" font-weight="normal" font-style="normal" fill="#111" text-anchor="start" textLength="53.6" lengthAdjust="spacingAndGlyphs"  stroke="#111" stroke-width="0.3">2016-01-04</text>
<rect x="888.5" y="581.6" width="95.5" height="44.7" fill="#fff" stroke="none" stroke-width="1" rx="4" />
<rect x="890.5" y="583.6" width="91.5" height="40.7" fill="#ffc0cb" stroke="none" stroke-width="1" rx="2" />
<text x="936.2" y="601" font-family="Liberation Sans" font-size="12.5" font-weight="bold" font-style="normal" fill="#b01028" text-anchor="middle" textLength="73" lengthAdjust="spacingAndGlyphs"  stroke="#b01028" stroke-width="0.3">Save/update</text>
<text x="936.2" y="614" font-family="Liberation Sans" font-size="12.5" font-weight="bold" font-style="normal" fill="#b01028" text-anchor="middle" textLength="55" lengthAdjust="spacingAndGlyphs"  stroke="#b01028" stroke-width="0.3">model 871</text>
<text x="548.4" y="614.7" font-family="Liberation Sans" font-size="11.5" font-weight="normal" font-style="normal" fill="#333" text-anchor="start" textLength="55.8" lengthAdjust="spacingAndGlyphs"  stroke="#333" stroke-width="0.3">Image scale</text>
<rect x="610" y="603" width="268.8" height="21.6" fill="#fbf5c8" stroke="none" stroke-width="1" rx="0" />
<line x1="620.7" y1="608.8" x2="620.7" y2="611.8" stroke="#a0a0a0" stroke-width="1" />
<line x1="626.61" y1="608.8" x2="626.61" y2="611.8" stroke="#a0a0a0" stroke-width="1" />
<line x1="632.5200000000001" y1="608.8" x2="632.5200000000001" y2="611.8" stroke="#a0a0a0" stroke-width="1" />
<line x1="638.4300000000001" y1="608.8" x2="638.4300000000001" y2="611.8" stroke="#a0a0a0" stroke-width="1" />
<line x1="644.34" y1="608.8" x2="644.34" y2="611.8" stroke="#a0a0a0" stroke-width="1" />
<line x1="650.25" y1="608.8" x2="650.25" y2="611.8" stroke="#a0a0a0" stroke-width="1" />
<line x1="656.1600000000001" y1="608.8" x2="656.1600000000001" y2="611.8" stroke="#a0a0a0" stroke-width="1" />
<line x1="662.07" y1="608.8" x2="662.07" y2="611.8" stroke="#a0a0a0" stroke-width="1" />
<line x1="667.98" y1="608.8" x2="667.98" y2="611.8" stroke="#a0a0a0" stroke-width="1" />
<line x1="673.8900000000001" y1="608.8" x2="673.8900000000001" y2="611.8" stroke="#a0a0a0" stroke-width="1" />
<line x1="679.8000000000001" y1="608.8" x2="679.8000000000001" y2="611.8" stroke="#a0a0a0" stroke-width="1" />
<line x1="685.71" y1="608.8" x2="685.71" y2="611.8" stroke="#a0a0a0" stroke-width="1" />
<line x1="691.62" y1="608.8" x2="691.62" y2="611.8" stroke="#a0a0a0" stroke-width="1" />
<line x1="697.5300000000001" y1="608.8" x2="697.5300000000001" y2="611.8" stroke="#a0a0a0" stroke-width="1" />
<line x1="703.44" y1="608.8" x2="703.44" y2="611.8" stroke="#a0a0a0" stroke-width="1" />
<line x1="709.35" y1="608.8" x2="709.35" y2="611.8" stroke="#a0a0a0" stroke-width="1" />
<line x1="715.26" y1="608.8" x2="715.26" y2="611.8" stroke="#a0a0a0" stroke-width="1" />
<line x1="721.1700000000001" y1="608.8" x2="721.1700000000001" y2="611.8" stroke="#a0a0a0" stroke-width="1" />
<line x1="727.08" y1="608.8" x2="727.08" y2="611.8" stroke="#a0a0a0" stroke-width="1" />
<line x1="732.99" y1="608.8" x2="732.99" y2="611.8" stroke="#a0a0a0" stroke-width="1" />
<line x1="738.9000000000001" y1="608.8" x2="738.9000000000001" y2="611.8" stroke="#a0a0a0" stroke-width="1" />
<line x1="744.8100000000001" y1="608.8" x2="744.8100000000001" y2="611.8" stroke="#a0a0a0" stroke-width="1" />
<line x1="750.72" y1="608.8" x2="750.72" y2="611.8" stroke="#a0a0a0" stroke-width="1" />
<line x1="756.6300000000001" y1="608.8" x2="756.6300000000001" y2="611.8" stroke="#a0a0a0" stroke-width="1" />
<line x1="762.5400000000001" y1="608.8" x2="762.5400000000001" y2="611.8" stroke="#a0a0a0" stroke-width="1" />
<line x1="768.45" y1="608.8" x2="768.45" y2="611.8" stroke="#a0a0a0" stroke-width="1" />
<line x1="774.36" y1="608.8" x2="774.36" y2="611.8" stroke="#a0a0a0" stroke-width="1" />
<line x1="780.27" y1="608.8" x2="780.27" y2="611.8" stroke="#a0a0a0" stroke-width="1" />
<line x1="786.1800000000001" y1="608.8" x2="786.1800000000001" y2="611.8" stroke="#a0a0a0" stroke-width="1" />
<line x1="792.09" y1="608.8" x2="792.09" y2="611.8" stroke="#a0a0a0" stroke-width="1" />
<line x1="798.0" y1="608.8" x2="798.0" y2="611.8" stroke="#a0a0a0" stroke-width="1" />
<line x1="803.9100000000001" y1="608.8" x2="803.9100000000001" y2="611.8" stroke="#a0a0a0" stroke-width="1" />
<line x1="809.82" y1="608.8" x2="809.82" y2="611.8" stroke="#a0a0a0" stroke-width="1" />
<line x1="815.73" y1="608.8" x2="815.73" y2="611.8" stroke="#a0a0a0" stroke-width="1" />
<line x1="821.6400000000001" y1="608.8" x2="821.6400000000001" y2="611.8" stroke="#a0a0a0" stroke-width="1" />
<line x1="827.5500000000001" y1="608.8" x2="827.5500000000001" y2="611.8" stroke="#a0a0a0" stroke-width="1" />
<line x1="833.46" y1="608.8" x2="833.46" y2="611.8" stroke="#a0a0a0" stroke-width="1" />
<line x1="839.3700000000001" y1="608.8" x2="839.3700000000001" y2="611.8" stroke="#a0a0a0" stroke-width="1" />
<line x1="845.2800000000001" y1="608.8" x2="845.2800000000001" y2="611.8" stroke="#a0a0a0" stroke-width="1" />
<line x1="851.19" y1="608.8" x2="851.19" y2="611.8" stroke="#a0a0a0" stroke-width="1" />
<line x1="857.1" y1="608.8" x2="857.1" y2="611.8" stroke="#a0a0a0" stroke-width="1" />
<line x1="863.01" y1="608.8" x2="863.01" y2="611.8" stroke="#a0a0a0" stroke-width="1" />
<line x1="868.9200000000001" y1="608.8" x2="868.9200000000001" y2="611.8" stroke="#a0a0a0" stroke-width="1" />
<rect x="616.2" y="619.2" width="256" height="3.2" fill="#e6e6e6" stroke="#d0d0d0" stroke-width="0.8" rx="0" />
<path d="M806.5,625.5 H815.7 V617 L811.1,614 L806.5,617 Z" fill="#0078d7" stroke="none" stroke-width="1" />
</svg></body></html>
